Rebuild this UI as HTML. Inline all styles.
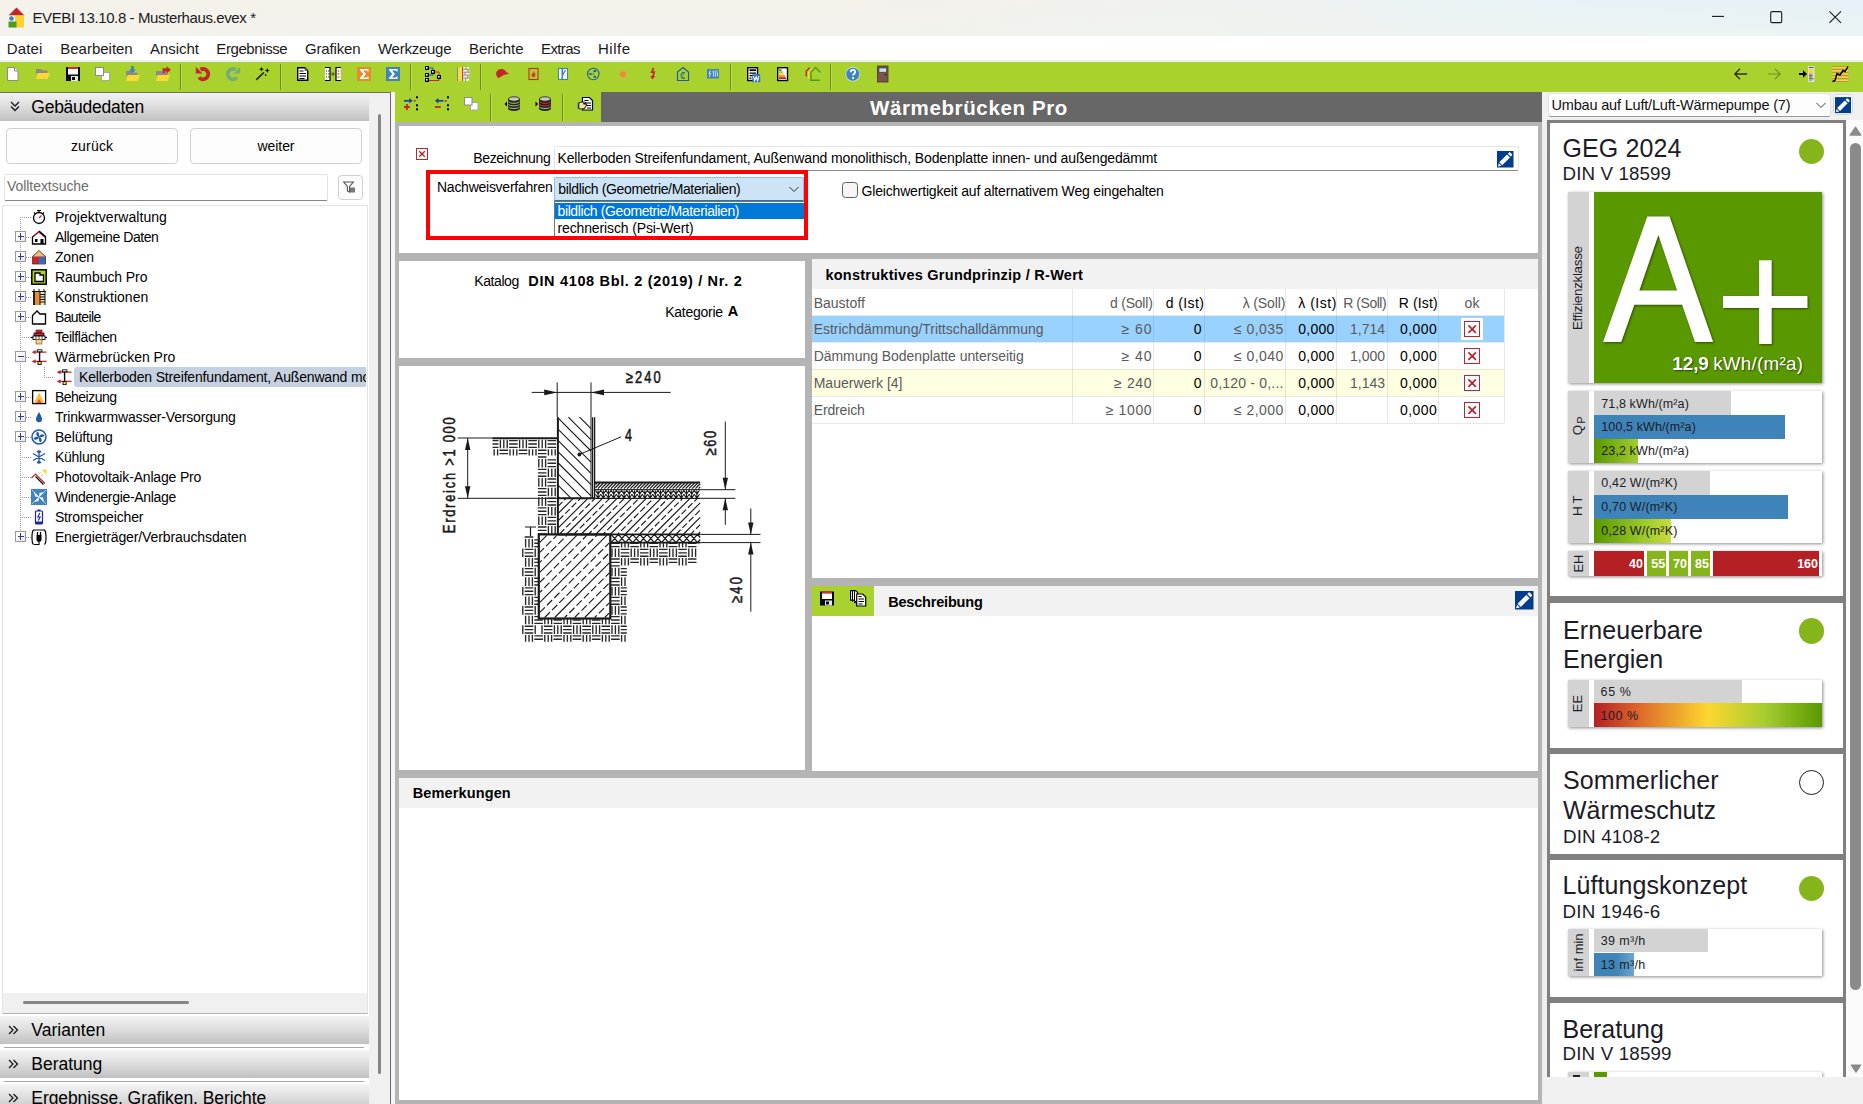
<!DOCTYPE html>
<html><head><meta charset="utf-8"><title>EVEBI</title>
<style>
html,body{margin:0;padding:0;}
html{overflow:hidden;width:1863px;height:1104px;}
body{width:1863px;height:1104px;overflow:hidden;position:relative;background:#f0f0f0;font-family:"Liberation Sans",sans-serif;color:#000;}
.t{position:absolute;white-space:nowrap;display:block;}
.b{position:absolute;box-sizing:border-box;}
svg{position:absolute;overflow:visible;}
</style></head><body>

<div class="b" style="left:0px;top:0px;width:1863px;height:36px;background:linear-gradient(180deg,rgba(255,255,255,0) 0%,rgba(240,244,238,.5) 100%),linear-gradient(90deg,#f5f1eb 0%,#f5f1eb 45%,#f1f2ee 62%,#e9f2f5 80%,#e6f2f8 100%);"></div>
<svg style="left:8px;top:7px" width="17" height="21" viewBox="0 0 17 21">
<polygon points="8.5,0.5 0.5,8.5 16.5,8.5" fill="#c4262c"/>
<rect x="1" y="8.5" width="6" height="6" fill="#f3f0ea"/>
<rect x="7" y="8.5" width="9" height="12" fill="#fbd230"/>
<circle cx="3.5" cy="11.5" r="2.3" fill="#3a86c4"/>
<rect x="0.5" y="14.5" width="8" height="6" fill="#4c9a1e"/>
</svg>
<span class="t" style="left:32.50px;top:7.50px;height:20px;line-height:20px;font-size:15px;color:#1b1b1b;letter-spacing:-0.389px;">EVEBI 13.10.8 - Musterhaus.evex *</span>
<svg style="left:1700px;top:0" width="163" height="36" viewBox="0 0 163 36" fill="none" stroke="#1a1a1a" stroke-width="1.1">
<path d="M12 16.400H24"/>
<rect x="70.700" y="11.600" width="11" height="11" rx="1.400"/>
<path d="M129.400 11.300L141 22.900M141 11.300L129.400 22.900"/>
</svg>
<div class="b" style="left:0px;top:36px;width:1863px;height:26px;background:#ffffff;"></div>
<span class="t" style="left:6.70px;top:38.50px;height:20px;line-height:20px;font-size:15px;color:#1a1a1a;letter-spacing:0.146px;">Datei</span>
<span class="t" style="left:60.30px;top:38.50px;height:20px;line-height:20px;font-size:15px;color:#1a1a1a;letter-spacing:-0.017px;">Bearbeiten</span>
<span class="t" style="left:150.00px;top:38.50px;height:20px;line-height:20px;font-size:15px;color:#1a1a1a;letter-spacing:-0.032px;">Ansicht</span>
<span class="t" style="left:216.30px;top:38.50px;height:20px;line-height:20px;font-size:15px;color:#1a1a1a;letter-spacing:-0.405px;">Ergebnisse</span>
<span class="t" style="left:305.00px;top:38.50px;height:20px;line-height:20px;font-size:15px;color:#1a1a1a;letter-spacing:-0.170px;">Grafiken</span>
<span class="t" style="left:378.00px;top:38.50px;height:20px;line-height:20px;font-size:15px;color:#1a1a1a;letter-spacing:-0.262px;">Werkzeuge</span>
<span class="t" style="left:469.00px;top:38.50px;height:20px;line-height:20px;font-size:15px;color:#1a1a1a;letter-spacing:-0.076px;">Berichte</span>
<span class="t" style="left:541.00px;top:38.50px;height:20px;line-height:20px;font-size:15px;color:#1a1a1a;letter-spacing:-0.602px;">Extras</span>
<span class="t" style="left:598.00px;top:38.50px;height:20px;line-height:20px;font-size:15px;color:#1a1a1a;letter-spacing:0.498px;">Hilfe</span>
<div class="b" style="left:0px;top:62px;width:1863px;height:30px;background:#aad22f;"></div>
<div class="b" style="left:0px;top:59.7px;width:1863px;height:2.3px;background:#f0f0f0;"></div>
<svg style="left:4px;top:66px" width="18" height="18" viewBox="0 0 18 18"><path d="M3.5 1.5h7l3.5 3.5v9.5h-10.5z" fill="#fff" stroke="#8a8a94"/><path d="M10.5 1.5v3.5h3.5" fill="#f4f4f4" stroke="#8a8a94"/></svg>
<svg style="left:34px;top:66px" width="18" height="18" viewBox="0 0 18 18"><path d="M2 3h5.5l1 1.5h5v3h-11.5z" fill="#8a8a8a"/><path d="M3.8 7h12.2l-2.4 6h-11.6z" fill="#fdd835"/></svg>
<svg style="left:64px;top:66px" width="18" height="18" viewBox="0 0 18 18"><rect x="2" y="1" width="14" height="14" fill="#0a0a14"/><rect x="4" y="1" width="10" height="2" fill="#d32f2f"/><rect x="4" y="3" width="10" height="5.5" fill="#fff"/><rect x="7" y="10" width="7" height="5" fill="#e8e8e8"/><rect x="8" y="11" width="3" height="3" fill="#0a0a14"/></svg>
<svg style="left:94px;top:66px" width="18" height="18" viewBox="0 0 18 18"><rect x="7.5" y="6.5" width="8" height="8" fill="#fff" stroke="#a6a6a6"/><rect x="1.5" y="1.5" width="8" height="8" fill="#fff" stroke="#8a8a94"/></svg>
<svg style="left:124px;top:66px" width="18" height="18" viewBox="0 0 18 18"><path d="M2 5h5.5l1 1.5h5v3h-11.5z" fill="#8a8a8a"/><path d="M3.8 9h12.2l-2.4 6h-11.6z" fill="#fdd835"/><path d="M7.2 0v3.5h-2.2l3.5 3.5l3.5-3.5h-2.2v-3.5z" fill="#3b83c0"/></svg>
<svg style="left:154px;top:66px" width="18" height="18" viewBox="0 0 18 18"><path d="M2 5h5.5l1 1.5h5v3h-11.5z" fill="#8a8a8a"/><path d="M3.8 9h12.2l-2.4 6h-11.6z" fill="#fdd835"/><path d="M8.5 2.2h4v-2l4.5 3.6l-4.5 3.6v-2h-1.5v1.6h-2.5z" fill="#c4262c"/></svg>
<div class="b" style="left:180.0px;top:64px;width:1px;height:26px;background:#6f8a1e;"></div><div class="b" style="left:181.0px;top:64px;width:1px;height:26px;background:#b9dc55;"></div>
<svg style="left:194px;top:66px" width="18" height="18" viewBox="0 0 18 18"><path d="M6.400 3.600A5.200 5.200 0 1 1 5 11.400" fill="none" stroke="#c4262c" stroke-width="3.800"/><path d="M1.800 0.800v6.600h6.600z" fill="#c4262c"/></svg>
<svg style="left:224px;top:66px" width="18" height="18" viewBox="0 0 18 18"><g transform="translate(18,0) scale(-1,1)"><path d="M6.400 3.600A5.200 5.200 0 1 1 5 11.400" fill="none" stroke="#74ad7c" stroke-width="3.800"/><path d="M1.800 0.800v6.600h6.600z" fill="#74ad7c"/></g></svg>
<svg style="left:254px;top:66px" width="18" height="18" viewBox="0 0 18 18"><path d="M2.200 13.900L9.900 6.400" stroke="#222" stroke-width="1.500"/><path d="M7.500 0.800l.700 1.700l1.700.700l-1.700.700l-.700 1.700l-.700-1.700l-1.700-.700l1.700-.700zM13.300 2l.700 1.800l1.800.700l-1.800.700l-.700 1.800l-.700-1.800l-1.800-.700l1.800-.700z" fill="#111"/><ellipse cx="11.600" cy="9" rx=".800" ry="1.100" fill="#111"/></svg>
<div class="b" style="left:280.0px;top:64px;width:1px;height:26px;background:#6f8a1e;"></div><div class="b" style="left:281.0px;top:64px;width:1px;height:26px;background:#b9dc55;"></div>
<svg style="left:293px;top:66px" width="18" height="18" viewBox="0 0 18 18"><path d="M4.7 1.7h7l3 3v9.6h-10z" fill="#fff" stroke="#000" stroke-width="1.4"/><path d="M11.5 1.5v3.5h3.5z" fill="#777"/><path d="M6.5 5h4M6.5 7.5h6.5M6.5 10h6.5M6.5 12.5h5" stroke="#000" stroke-width="1.2"/></svg>
<svg style="left:324px;top:66px" width="18" height="18" viewBox="0 0 18 18"><rect x="1" y="1.5" width="5" height="13" fill="#fff"/><rect x="12" y="1.5" width="5" height="13" fill="#fff"/><path d="M1 1.5h5M1 14.5h5M12 1.5h5M12 14.5h5M6 1v14M12 1v14" stroke="#000" stroke-width="1.2"/><path d="M2 5h3M2 8h3M2 11h3" stroke="#333" stroke-width="1" stroke-dasharray="1 1"/><path d="M13.5 5h3M13.5 8h3M13.5 11h3" stroke="#c4262c" stroke-width="1.2" stroke-dasharray="1.5 .7"/><circle cx="9" cy="8" r="1.7" fill="#5d6b2a"/></svg>
<svg style="left:354.5px;top:66px" width="18" height="18" viewBox="0 0 18 18"><rect x="2" y="1" width="14" height="14" fill="#ea8a2e"/><path d="M5 3h8.5v2.6h-1.2v-1h-4.3l3 3.4l-3 3.4h4.3v-1h1.2v2.6h-8.5v-1.3l3.3-3.7l-3.3-3.7z" fill="#fff"/></svg>
<svg style="left:384px;top:66px" width="18" height="18" viewBox="0 0 18 18"><rect x="2" y="1" width="14" height="14" fill="#3f84bc"/><path d="M5 3h8.5v2.6h-1.2v-1h-4.3l3 3.4l-3 3.4h4.3v-1h1.2v2.6h-8.5v-1.3l3.3-3.7l-3.3-3.7z" fill="#fff"/></svg>
<div class="b" style="left:410.0px;top:64px;width:1px;height:26px;background:#6f8a1e;"></div><div class="b" style="left:411.0px;top:64px;width:1px;height:26px;background:#b9dc55;"></div>
<svg style="left:424px;top:66px" width="18" height="18" viewBox="0 0 18 18"><path d="M5 2h4v3M5 9h4v-3" fill="none" stroke="#1554b0" stroke-width="1"/><path d="M11 6h4v3M5 14.5h10v-3" fill="none" stroke="#c4262c" stroke-width="1"/><rect x="1" y="0" width="4" height="4" fill="#000"/><rect x="2" y="1" width="1.6" height="1.6" fill="#fff"/><rect x="7" y="4" width="4" height="4" fill="#000"/><rect x="8" y="5" width="1.6" height="1.6" fill="#fff"/><rect x="1" y="7" width="4" height="4" fill="#000"/><rect x="2" y="8" width="1.6" height="1.6" fill="#fff"/><rect x="13" y="9" width="4" height="4" fill="#000"/><rect x="14" y="10" width="1.6" height="1.6" fill="#fff"/><rect x="1" y="12" width="4" height="4" fill="#000"/><rect x="2" y="13" width="1.6" height="1.6" fill="#fff"/></svg>
<svg style="left:455px;top:66px" width="18" height="18" viewBox="0 0 18 18"><rect x="2" y="1" width="1.2" height="14" fill="#8a8a8a"/><rect x="3.2" y="1" width="4" height="14" fill="#fdd835"/><path d="M3.2 3h4M3.2 6h4M3.2 9h4M3.2 12h4" stroke="#f3e79a" stroke-width="1"/><rect x="7.2" y="1" width="1" height="14" fill="#c4262c"/><rect x="8.2" y="1" width="6" height="14" fill="#efefef"/><path d="M8.2 3.3h6M8.2 6.2h6M8.2 9.1h6M8.2 12h6M11 1v2.3M12.8 3.3v2.9M10 6.2v2.9M12.8 9.1v2.9M10.5 12v3" stroke="#8e8e8e" stroke-width="1"/></svg>
<div class="b" style="left:480.0px;top:64px;width:1px;height:26px;background:#6f8a1e;"></div><div class="b" style="left:481.0px;top:64px;width:1px;height:26px;background:#b9dc55;"></div>
<svg style="left:493px;top:66px" width="18" height="18" viewBox="0 0 18 18"><path d="M3.2 8.5c-.6-3 2-5.6 5.2-5.6c2.6 0 4.2 1.3 4.8 3.2l3 1.6l-5.6 1.4l-4.8 3c-1.4-.6-2.2-1.9-2.6-3.6z" fill="#c4262c"/></svg>
<svg style="left:524px;top:66px" width="18" height="18" viewBox="0 0 18 18"><rect x="5" y="2.5" width="9" height="11" fill="none" stroke="#c4262c" stroke-width="1.1"/><path d="M9.5 5c1 1.3 2 2.4 2 4c0 1.3-.9 2.2-2 2.2s-2-.9-2-2.2c0-.9.6-1.5 1-2.2c.2.8.6 1 .8 1c0-.9-.1-1.8.2-2.8z" fill="#d9362f"/></svg>
<svg style="left:554px;top:66px" width="18" height="18" viewBox="0 0 18 18"><rect x="4.5" y="2.5" width="9" height="11" fill="#fff" stroke="#3f84bc" stroke-width="1.1"/><path d="M8.3 3v10.5" stroke="#3f84bc" stroke-width="1.6"/><path d="M8.5 9.5l3-5.5" stroke="#3f84bc" stroke-width="1.3"/></svg>
<svg style="left:584px;top:66px" width="18" height="18" viewBox="0 0 18 18"><circle cx="9.3" cy="8" r="5.7" fill="none" stroke="#1e5aa8" stroke-width="1.1"/><ellipse cx="10.8" cy="5.2" rx="1.5" ry="1.1" fill="#1e5aa8"/><ellipse cx="6.5" cy="8" rx="1.5" ry="1.1" fill="#1e5aa8"/><ellipse cx="10.8" cy="10.8" rx="1.5" ry="1.1" fill="#1e5aa8"/><circle cx="9.3" cy="8" r=".8" fill="#1e5aa8"/></svg>
<svg style="left:614px;top:66px" width="18" height="18" viewBox="0 0 18 18"><circle cx="9" cy="8.3" r="3" fill="#f0883a"/><g stroke="#f0a060" stroke-width="1.1"><path d="M9 2.7v1.6M9 12.3v1.6M3.4 8.3h1.6M13 8.3h1.6M5 4.3l1.2 1.2M11.8 11.1l1.2 1.2M13 4.3l-1.2 1.2M6.2 11.1L5 12.3"/></g></svg>
<svg style="left:644px;top:66px" width="18" height="18" viewBox="0 0 18 18"><path d="M9.5 2l-1.8 4.2h2.6l-1.6 4.6" fill="none" stroke="#c4262c" stroke-width="1.7"/><path d="M6.3 10h5l-3 3.4z" fill="#c4262c"/></svg>
<svg style="left:674px;top:66px" width="18" height="18" viewBox="0 0 18 18"><path d="M3.5 14.5v-8.5l5.5-4.5l5.5 4.5v8.5z" fill="none" stroke="#1e5aa8" stroke-width="1.2"/><path d="M11 7.2a2.6 2.8 0 1 0 0 4.6" fill="none" stroke="#1e5aa8" stroke-width="1.1"/><path d="M7 8.8h3M7 10.2h3" stroke="#3f9a6a" stroke-width=".8"/></svg>
<svg style="left:704px;top:66px" width="18" height="18" viewBox="0 0 18 18"><rect x="3" y="3" width="12" height="9.5" fill="#3f84bc"/><path d="M6.5 4.5l-1.5 3h1.6l-1.4 3.4M9.3 4.5c-1 1.4 1 2.6 0 6M11.3 4.5c-1 1.4 1 2.6 0 6M13.3 4.5c-1 1.4 1 2.6 0 6" fill="none" stroke="#e8f2fa" stroke-width=".9"/></svg>
<div class="b" style="left:730.0px;top:64px;width:1px;height:26px;background:#6f8a1e;"></div><div class="b" style="left:731.0px;top:64px;width:1px;height:26px;background:#b9dc55;"></div>
<svg style="left:744px;top:66px" width="18" height="18" viewBox="0 0 18 18"><rect x="3.7" y="1.7" width="9.8" height="12.8" fill="#fff" stroke="#000" stroke-width="1.4"/><path d="M5.5 4.2h6.5" stroke="#000" stroke-width="1.8"/><path d="M5.5 7.2h6.5M5.5 9.7h6.5M5.5 12.2h2" stroke="#000" stroke-width="1.2"/><rect x="8.2" y="8.2" width="8" height="8" fill="#3a6cc0"/><path d="M9.5 10.2l1.2 4.6l1.5-4l1.5 4l1.2-4.6" fill="none" stroke="#fff" stroke-width="1.1"/></svg>
<svg style="left:774px;top:66px" width="18" height="18" viewBox="0 0 18 18"><rect x="3.7" y="1.7" width="9.8" height="12.8" fill="#fff" stroke="#000" stroke-width="1.4"/><rect x="5" y="3.2" width="2.6" height="1.8" fill="#4c9a1e"/><rect x="5" y="5.2" width="3.8" height="1.8" fill="#9ccc3a"/><rect x="5" y="7.2" width="5" height="1.8" fill="#fdd835"/><rect x="5" y="9.2" width="6" height="1.8" fill="#ea8a2e"/><rect x="5" y="11.2" width="7" height="1.8" fill="#c4262c"/></svg>
<svg style="left:804px;top:66px" width="18" height="18" viewBox="0 0 18 18"><path d="M2.3 10.5v-5.5l3.5-3.5" fill="none" stroke="#c4262c" stroke-width="1.4"/><path d="M4.8 12.5v-6l4-4" fill="none" stroke="#fdd835" stroke-width="1.6"/><path d="M16.5 6.5l-5-5l-4.6 4.6v8.2h9" fill="none" stroke="#4c9a1e" stroke-width="1.4"/></svg>
<div class="b" style="left:830.0px;top:64px;width:1px;height:26px;background:#6f8a1e;"></div><div class="b" style="left:831.0px;top:64px;width:1px;height:26px;background:#b9dc55;"></div>
<svg style="left:844px;top:65.5px" width="18" height="18" viewBox="0 0 18 18"><circle cx="8.8" cy="8.2" r="7.4" fill="#c7d9e6"/><circle cx="8.8" cy="8.2" r="6.5" fill="#3f84bc"/><path d="M6.6 6.3c0-1.5 1-2.4 2.3-2.4s2.3.9 2.3 2.1c0 1.7-2.2 1.8-2.2 3.6" fill="none" stroke="#fff" stroke-width="1.7"/><circle cx="9" cy="12" r="1.1" fill="#fff"/></svg>
<svg style="left:874px;top:66px" width="18" height="18" viewBox="0 0 18 18"><rect x="3.5" y="0" width="10.5" height="16" fill="#7a5548"/><rect x="3.5" y="0" width="10.5" height="16" fill="none" stroke="#4a2f28" stroke-width=".8"/><rect x="5" y="2" width="7.5" height="4.2" fill="#bfe3f7" stroke="#4a2f28" stroke-width=".6"/><path d="M10.5 8.8h2.2" stroke="#2a1a14" stroke-width="1"/></svg>
<svg style="left:1732px;top:66px" width="18" height="18" viewBox="0 0 18 18"><path d="M2.5 8h12.5M8 2.8L2.8 8l5.2 5.2" fill="none" stroke="#2b2f1e" stroke-width="1.3"/></svg>
<svg style="left:1766px;top:66px" width="18" height="18" viewBox="0 0 18 18"><path d="M2 8h12.5M9 2.8l5.2 5.2l-5.2 5.2" fill="none" stroke="#6e8f22" stroke-width="1.2"/></svg>
<svg style="left:1798px;top:66px" width="18" height="18" viewBox="0 0 18 18"><path d="M1 8h5" stroke="#000" stroke-width="2"/><path d="M5 4.3l4 3.7l-4 3.7z" fill="#000"/><rect x="10" y="0" width="6.5" height="16" fill="#dcdce8"/><rect x="11" y="1" width="4.5" height="1" fill="#555"/><rect x="11" y="3" width="4.5" height="4" fill="#fdd835"/><rect x="11" y="7.5" width="3.5" height="1.3" fill="#7cb342"/><rect x="11" y="9.2" width="3.5" height="1.3" fill="#c4262c"/><rect x="11" y="10.8" width="3.5" height="1.3" fill="#7cb342"/><rect x="11" y="12.3" width="4.5" height="1" fill="#555"/><rect x="11" y="13.6" width="2.5" height="1.2" fill="#7cb342"/></svg>
<svg style="left:1832px;top:66px" width="18" height="18" viewBox="0 0 18 18"><rect x="0" y="0" width="16.5" height="16" fill="#a89a50"/><rect x="0" y="1" width="16.5" height="1.6" fill="#fdd835"/><rect x="0" y="4.1" width="16.5" height="1.6" fill="#fdd835"/><rect x="0" y="7.2" width="16.5" height="1.6" fill="#fdd835"/><rect x="0" y="10.3" width="16.5" height="1.6" fill="#fdd835"/><rect x="0" y="13.4" width="16.5" height="1.6" fill="#fdd835"/><path d="M0.5 15.5l2.5-1l2-7l3 1.5l3-4.5l2 1l3-5" fill="none" stroke="#000" stroke-width="1.4"/></svg>
<div class="b" style="left:395px;top:92px;width:206px;height:30.3px;background:#aad22f;"></div>
<svg style="left:404px;top:96px" width="18" height="18" viewBox="0 0 18 18"><path d="M0 4.8h6" stroke="#0d47a1" stroke-width="1.7"/><path d="M5.3 2l3.4 2.8l-3.4 2.8z" fill="#0d47a1"/><rect x="9.8" y="4" width="1.8" height="1.7" fill="#c4262c"/><rect x="12" y="0.3" width="2" height="2" fill="#000"/><rect x="12" y="8.3" width="2" height="2" fill="#000"/><rect x="12" y="12.3" width="2" height="2" fill="#000"/><path d="M0 11h5.8M2.9 8.1v5.8" stroke="#c4262c" stroke-width="1.8"/></svg>
<svg style="left:435px;top:96px" width="18" height="18" viewBox="0 0 18 18"><path d="M2.5 4.8h6" stroke="#0d47a1" stroke-width="1.7"/><path d="M3.4 2L0 4.8l3.4 2.8z" fill="#0d47a1"/><rect x="9.8" y="4" width="1.8" height="1.7" fill="#c4262c"/><rect x="12" y="0.3" width="2" height="2" fill="#000"/><rect x="12" y="8.3" width="2" height="2" fill="#000"/><rect x="12" y="12.3" width="2" height="2" fill="#000"/><path d="M0 11h5.8" stroke="#c4262c" stroke-width="1.8"/></svg>
<svg style="left:463px;top:96px" width="18" height="18" viewBox="0 0 18 18"><rect x="7.5" y="6.5" width="7.5" height="7.5" fill="#fff" stroke="#a6a6a6"/><rect x="1.5" y="1.5" width="7.5" height="7.5" fill="#fff" stroke="#8a8a94"/></svg>
<div class="b" style="left:490.0px;top:94px;width:1px;height:27px;background:#6f8a1e;"></div><div class="b" style="left:491.0px;top:94px;width:1px;height:27px;background:#b9dc55;"></div>
<svg style="left:504px;top:96px" width="18" height="18" viewBox="0 0 18 18"><path d="M4 3v9.5c0 1.4 2.7 2.4 6 2.4s6-1 6-2.4v-9.500z" fill="#222"/><path d="M4.3 5.6c1 1.2 3 1.7 5.700 1.700s4.700-.5 5.700-1.700" fill="none" stroke="#a8d040" stroke-width="1"/><path d="M4.3 8.200c1 1.200 3 1.700 5.700 1.700s4.700-.5 5.700-1.700" fill="none" stroke="#a8d040" stroke-width="1"/><path d="M4.300 10.800c1 1.200 3 1.700 5.700 1.700s4.700-.5 5.700-1.700" fill="none" stroke="#bbb" stroke-width="1"/><ellipse cx="10" cy="3" rx="5.600" ry="2.200" fill="#c8c8c8" stroke="#222" stroke-width=".8"/><path d="M3 5.500v5l-2.500-2.500z" fill="#000"/></svg>
<svg style="left:535px;top:96px" width="18" height="18" viewBox="0 0 18 18"><path d="M4 3v9.5c0 1.4 2.7 2.4 6 2.4s6-1 6-2.4v-9.500z" fill="#222"/><path d="M4.3 5.6c1 1.2 3 1.7 5.700 1.700s4.700-.5 5.700-1.700" fill="none" stroke="#d32f2f" stroke-width="1"/><path d="M4.3 8.200c1 1.200 3 1.700 5.700 1.700s4.700-.5 5.700-1.700" fill="none" stroke="#d32f2f" stroke-width="1"/><path d="M4.300 10.800c1 1.200 3 1.700 5.700 1.700s4.700-.5 5.700-1.700" fill="none" stroke="#bbb" stroke-width="1"/><ellipse cx="10" cy="3" rx="5.600" ry="2.200" fill="#c8c8c8" stroke="#222" stroke-width=".8"/><path d="M.500 5.500v5l2.500-2.500z" fill="#000"/></svg>
<div class="b" style="left:562.0px;top:94px;width:1px;height:27px;background:#6f8a1e;"></div><div class="b" style="left:563.0px;top:94px;width:1px;height:27px;background:#b9dc55;"></div>
<svg style="left:576px;top:96px" width="18" height="18" viewBox="0 0 18 18"><path d="M6.500 1.500h7l3 3v9.500h-10z" fill="#fff" stroke="#000" stroke-width="1.200"/><path d="M8.500 4.500h4M11 7h4M11 9.500h4M11 12h4" stroke="#000" stroke-width="1"/><path d="M1.500 6.500h1.300v6.500h-1.300z" fill="#3f84bc"/><path d="M2.800 6.800c2-.8 5-1 7.500-.3v1.200h-3l3.500.6v1.300l-1 .3v1.200l-1 .3v1.100l-3 .5c-1.500 0-2.500-.3-3-.7z" fill="#f3e3a8" stroke="#000" stroke-width=".9"/></svg>
<div class="b" style="left:0px;top:92px;width:369px;height:1012px;background:#ffffff;"></div>
<div class="b" style="left:369px;top:92px;width:22px;height:1012px;background:#f0f0f0;"></div>
<div class="b" style="left:390px;top:92px;width:1.3px;height:1012px;background:#6a6a6a;"></div>
<div class="b" style="left:391.3px;top:92px;width:3.7px;height:1012px;background:#f5f5fa;"></div>
<div class="b" style="left:378px;top:114px;width:3px;height:960px;background:#868686;border-radius:1.500px;"></div>
<div class="b" style="left:0px;top:92px;width:369px;height:29.3px;background:linear-gradient(180deg,#f4f4f4 0%,#e4e4e4 35%,#cfcfcf 75%,#c0c0c0 100%);"></div>
<div class="b" style="left:0px;top:92px;width:391px;height:1px;background:#6e6e6e;"></div>
<svg style="left:9.5px;top:101px" width="10" height="11" viewBox="0 0 10 11"><path d="M1 1l4 4l4-4M1 5.500l4 4l4-4" fill="none" stroke="#1a1a1a" stroke-width="1.300"/></svg>
<span class="t" style="left:31.30px;top:95.80px;height:23px;line-height:23px;font-size:17.5px;letter-spacing:-0.255px;">Gebäudedaten</span>
<div class="b" style="left:6px;top:128px;width:172px;height:36px;background:#fdfdfd;border:1px solid #d0d0d0;border-radius:4px;"></div>
<span class="t" style="left:70.90px;top:137.20px;height:18px;line-height:18px;font-size:14px;letter-spacing:0.193px;">zurück</span>
<div class="b" style="left:190px;top:128px;width:172px;height:36px;background:#fdfdfd;border:1px solid #d0d0d0;border-radius:4px;"></div>
<span class="t" style="left:257.60px;top:137.20px;height:18px;line-height:18px;font-size:14px;letter-spacing:-0.089px;">weiter</span>
<div class="b" style="left:4px;top:174px;width:324px;height:27px;background:#fff;border:1px solid #e3e3e3;border-bottom:1.500px solid #868686;border-radius:2px;"></div>
<span class="t" style="left:6.90px;top:177.30px;height:18px;line-height:18px;font-size:14px;color:#6d6d6d;letter-spacing:-0.042px;">Volltextsuche</span>
<div class="b" style="left:337.5px;top:175.3px;width:25px;height:24.3px;background:#fdfdfd;border:1px solid #d0d0d0;border-radius:4px;"></div>
<svg style="left:343px;top:181px" width="13" height="13" viewBox="0 0 13 13"><path d="M0.700 1h9.600l-3.700 4.500v5.500l-2.200-1.200v-4.300z" fill="none" stroke="#555" stroke-width="1.100"/><rect x="7" y="6.500" width="5" height="5" fill="#777"/></svg>
<div class="b" style="left:1.5px;top:205px;width:366.5px;height:809px;background:#fff;border:1px solid #e3e3e3;border-bottom-color:#b4b4b4;"></div>
<div class="b" style="left:2.5px;top:993px;width:364.5px;height:20px;background:#f0f0f0;"></div>
<div class="b" style="left:23px;top:1001px;width:166px;height:3px;background:#868686;border-radius:1.500px;"></div>
<div class="b" style="left:19.5px;top:217px;width:1px;height:320px;background-image:linear-gradient(#9a9a9a 50%,transparent 50%);background-size:1px 2px;"></div>
<div class="b" style="left:19.5px;top:217px;width:11.5px;height:1px;background-image:linear-gradient(90deg,#9a9a9a 50%,transparent 50%);background-size:2px 1px;"></div>
<svg style="left:31px;top:209px" width="16" height="16" viewBox="0 0 16 16"><circle cx="8" cy="9" r="5.500" fill="#fff" stroke="#000" stroke-width="1.300"/><path d="M6 1.500h4M8 1.500v2M3 3.500l1.500 1.500M13 3.500l-1.500 1.500" stroke="#000" stroke-width="1.200"/><path d="M8 9l2.500-2.500" stroke="#c4262c" stroke-width="1.200"/></svg>
<span class="t" style="left:54.90px;top:208.00px;height:18px;line-height:18px;font-size:14px;letter-spacing:0.045px;">Projektverwaltung</span>
<div class="b" style="left:19.5px;top:237px;width:11.5px;height:1px;background-image:linear-gradient(90deg,#9a9a9a 50%,transparent 50%);background-size:2px 1px;"></div>
<div class="b" style="left:15px;top:230.8px;width:11px;height:11px;background:#fff;border:1px solid #9a9a9a;background:linear-gradient(135deg,#fff 30%,#e4e4e4);"></div><div class="b" style="left:17.5px;top:235.70000000000002px;width:6.5px;height:1.2px;background:#2a3f8f;"></div><div class="b" style="left:20px;top:233.10000000000002px;width:1.2px;height:6.5px;background:#2a3f8f;"></div>
<svg style="left:31px;top:229px" width="16" height="16" viewBox="0 0 16 16"><path d="M1.500 15v-7l6.500-5.500l6.500 5.500v7z" fill="#fff" stroke="#000" stroke-width="1.300"/><path d="M1 8l7-6l7 6l-1 1l-6-5z" fill="#c4262c"/><path d="M8 2l7 6" stroke="#000" stroke-width="1.200"/><rect x="4" y="10" width="2.500" height="3" fill="#000"/><rect x="9.500" y="10" width="3" height="5" fill="#000"/></svg>
<span class="t" style="left:54.90px;top:228.00px;height:18px;line-height:18px;font-size:14px;letter-spacing:-0.434px;">Allgemeine Daten</span>
<div class="b" style="left:19.5px;top:257px;width:11.5px;height:1px;background-image:linear-gradient(90deg,#9a9a9a 50%,transparent 50%);background-size:2px 1px;"></div>
<div class="b" style="left:15px;top:250.8px;width:11px;height:11px;background:#fff;border:1px solid #9a9a9a;background:linear-gradient(135deg,#fff 30%,#e4e4e4);"></div><div class="b" style="left:17.5px;top:255.70000000000002px;width:6.5px;height:1.2px;background:#2a3f8f;"></div><div class="b" style="left:20px;top:253.10000000000002px;width:1.2px;height:6.5px;background:#2a3f8f;"></div>
<svg style="left:31px;top:249px" width="16" height="16" viewBox="0 0 16 16"><path d="M1.500 15v-7.500l6.500-6l6.500 6v7.500z" fill="#c4262c" stroke="#7a1a1a" stroke-width=".800"/><path d="M8 2l6 5.500h-12z" fill="#e8c080"/><rect x="8" y="8" width="6" height="7" fill="#2a70c0"/></svg>
<span class="t" style="left:54.90px;top:248.00px;height:18px;line-height:18px;font-size:14px;letter-spacing:-0.124px;">Zonen</span>
<div class="b" style="left:19.5px;top:277px;width:11.5px;height:1px;background-image:linear-gradient(90deg,#9a9a9a 50%,transparent 50%);background-size:2px 1px;"></div>
<div class="b" style="left:15px;top:270.8px;width:11px;height:11px;background:#fff;border:1px solid #9a9a9a;background:linear-gradient(135deg,#fff 30%,#e4e4e4);"></div><div class="b" style="left:17.5px;top:275.7px;width:6.5px;height:1.2px;background:#2a3f8f;"></div><div class="b" style="left:20px;top:273.1px;width:1.2px;height:6.5px;background:#2a3f8f;"></div>
<svg style="left:31px;top:269px" width="16" height="16" viewBox="0 0 16 16"><rect x="0.800" y="0.800" width="14.400" height="14.400" fill="#aad22f" stroke="#000" stroke-width="1.500"/><path d="M4 4h5v2h3.500v6.500h-8.500z" fill="#fff" stroke="#000" stroke-width="1.300"/></svg>
<span class="t" style="left:54.90px;top:268.00px;height:18px;line-height:18px;font-size:14px;letter-spacing:-0.071px;">Raumbuch Pro</span>
<div class="b" style="left:19.5px;top:297px;width:11.5px;height:1px;background-image:linear-gradient(90deg,#9a9a9a 50%,transparent 50%);background-size:2px 1px;"></div>
<div class="b" style="left:15px;top:290.8px;width:11px;height:11px;background:#fff;border:1px solid #9a9a9a;background:linear-gradient(135deg,#fff 30%,#e4e4e4);"></div><div class="b" style="left:17.5px;top:295.7px;width:6.5px;height:1.2px;background:#2a3f8f;"></div><div class="b" style="left:20px;top:293.1px;width:1.2px;height:6.5px;background:#2a3f8f;"></div>
<svg style="left:31px;top:289px" width="16" height="16" viewBox="0 0 16 16"><rect x="2" y="3" width="2" height="13" fill="#222"/><rect x="4" y="3" width="5" height="13" fill="#ea8a2e"/><rect x="9" y="3" width="5" height="13" fill="#f3e3a8"/><path d="M9 3v13M14 3v13M9 5.500h5M9 8h5M9 10.500h5M9 13h5M1 2.500h14M3 0v3M8 0v3M13 0v3" stroke="#111" stroke-width="1"/></svg>
<span class="t" style="left:54.90px;top:288.00px;height:18px;line-height:18px;font-size:14px;letter-spacing:-0.007px;">Konstruktionen</span>
<div class="b" style="left:19.5px;top:317px;width:11.5px;height:1px;background-image:linear-gradient(90deg,#9a9a9a 50%,transparent 50%);background-size:2px 1px;"></div>
<div class="b" style="left:15px;top:310.8px;width:11px;height:11px;background:#fff;border:1px solid #9a9a9a;background:linear-gradient(135deg,#fff 30%,#e4e4e4);"></div><div class="b" style="left:17.5px;top:315.7px;width:6.5px;height:1.2px;background:#2a3f8f;"></div><div class="b" style="left:20px;top:313.1px;width:1.2px;height:6.5px;background:#2a3f8f;"></div>
<svg style="left:31px;top:309px" width="16" height="16" viewBox="0 0 16 16"><path d="M1.500 15v-8.500l4.500-4.500l3 3h5.500v10z" fill="#fff" stroke="#000" stroke-width="1.300"/></svg>
<span class="t" style="left:54.90px;top:308.00px;height:18px;line-height:18px;font-size:14px;letter-spacing:-0.585px;">Bauteile</span>
<div class="b" style="left:19.5px;top:337px;width:11.5px;height:1px;background-image:linear-gradient(90deg,#9a9a9a 50%,transparent 50%);background-size:2px 1px;"></div>
<svg style="left:31px;top:329px" width="16" height="16" viewBox="0 0 16 16"><rect x="5" y="1" width="6" height="3" fill="#c4262c" stroke="#7a1a1a" stroke-width=".700"/><rect x="3" y="4" width="10" height="3" fill="#c4262c" stroke="#000" stroke-width=".700"/><path d="M0 8.500h16" stroke="#000" stroke-width="1.200"/><rect x="2" y="7" width="12" height="3.500" fill="#fff" stroke="#000" stroke-width=".900"/><path d="M5 7v3.500M8 7v3.500M11 7v3.500" stroke="#000" stroke-width=".700"/><rect x="5" y="10.500" width="6" height="4.500" fill="#f3c880" stroke="#8a5a20" stroke-width=".700"/></svg>
<span class="t" style="left:54.90px;top:328.00px;height:18px;line-height:18px;font-size:14px;letter-spacing:-0.395px;">Teilflächen</span>
<div class="b" style="left:19.5px;top:357px;width:11.5px;height:1px;background-image:linear-gradient(90deg,#9a9a9a 50%,transparent 50%);background-size:2px 1px;"></div>
<div class="b" style="left:15px;top:350.8px;width:11px;height:11px;background:#fff;border:1px solid #9a9a9a;background:linear-gradient(135deg,#fff 30%,#e4e4e4);"></div><div class="b" style="left:17.5px;top:355.7px;width:6.5px;height:1.2px;background:#2a3f8f;"></div>
<svg style="left:31px;top:349px" width="16" height="16" viewBox="0 0 16 16"><path d="M2 3.200h13.500M2 12.400h13.500" stroke="#c4262c" stroke-width="1.200"/><path d="M4.600 1.100l-3.800 2.100l3.800 2.100zM4.600 10.300l-3.800 2.100l3.800 2.100z" fill="#c4262c"/><path d="M8.600 2v11" stroke="#111" stroke-width="1.400"/><rect x="6.300" y="0.800" width="4.600" height="2" fill="#fff" stroke="#111" stroke-width=".900"/><rect x="7" y="12.600" width="3.200" height="3" fill="#fdd835" stroke="#111" stroke-width=".900"/></svg>
<span class="t" style="left:54.90px;top:348.00px;height:18px;line-height:18px;font-size:14px;letter-spacing:-0.006px;">Wärmebrücken Pro</span>
<div class="b" style="left:44px;top:367px;width:1px;height:10px;background-image:linear-gradient(#9a9a9a 50%,transparent 50%);background-size:1px 2px;"></div>
<div class="b" style="left:44px;top:377px;width:10px;height:1px;background-image:linear-gradient(90deg,#9a9a9a 50%,transparent 50%);background-size:2px 1px;"></div>
<svg style="left:55.5px;top:369px" width="16" height="16" viewBox="0 0 16 16"><path d="M2 3.200h13.500M2 12.400h13.500" stroke="#c4262c" stroke-width="1.200"/><path d="M4.600 1.100l-3.800 2.100l3.800 2.100zM4.600 10.300l-3.800 2.100l3.800 2.100z" fill="#c4262c"/><path d="M8.600 2v11" stroke="#111" stroke-width="1.400"/><rect x="6.300" y="0.800" width="4.600" height="2" fill="#fff" stroke="#111" stroke-width=".900"/><rect x="7" y="12.600" width="3.200" height="3" fill="#fdd835" stroke="#111" stroke-width=".900"/></svg>
<div class="b" style="left:74px;top:367px;width:292px;height:19.5px;background:#c5d1de;border-radius:3px 0 0 3px;"></div>
<div class="b" style="left:74px;top:367px;width:292px;height:20px;overflow:hidden;"><span class="t" style="left:5.00px;top:1.00px;height:18px;line-height:18px;font-size:14px;letter-spacing:-0.163px;">Kellerboden Streifenfundament, Außenwand monolithisch</span></div>
<div class="b" style="left:19.5px;top:397px;width:11.5px;height:1px;background-image:linear-gradient(90deg,#9a9a9a 50%,transparent 50%);background-size:2px 1px;"></div>
<div class="b" style="left:15px;top:390.8px;width:11px;height:11px;background:#fff;border:1px solid #9a9a9a;background:linear-gradient(135deg,#fff 30%,#e4e4e4);"></div><div class="b" style="left:17.5px;top:395.7px;width:6.5px;height:1.2px;background:#2a3f8f;"></div><div class="b" style="left:20px;top:393.1px;width:1.2px;height:6.5px;background:#2a3f8f;"></div>
<svg style="left:31px;top:389px" width="16" height="16" viewBox="0 0 16 16"><rect x="1.600" y="1.600" width="13" height="13" fill="#fff" stroke="#000" stroke-width="1.300"/><path d="M8.100 3.500l5 10.500h-10z" fill="#fdb933"/><path d="M8.100 10l2.500 4h-5z" fill="#e8532f"/></svg>
<span class="t" style="left:54.90px;top:388.00px;height:18px;line-height:18px;font-size:14px;letter-spacing:-0.496px;">Beheizung</span>
<div class="b" style="left:19.5px;top:417px;width:11.5px;height:1px;background-image:linear-gradient(90deg,#9a9a9a 50%,transparent 50%);background-size:2px 1px;"></div>
<div class="b" style="left:15px;top:410.8px;width:11px;height:11px;background:#fff;border:1px solid #9a9a9a;background:linear-gradient(135deg,#fff 30%,#e4e4e4);"></div><div class="b" style="left:17.5px;top:415.7px;width:6.5px;height:1.2px;background:#2a3f8f;"></div><div class="b" style="left:20px;top:413.1px;width:1.2px;height:6.5px;background:#2a3f8f;"></div>
<svg style="left:31px;top:409px" width="16" height="16" viewBox="0 0 16 16"><path d="M8 3c1.500 3 3 5 3 7.200a3 3 0 0 1-6 0c0-2.200 1.500-4.200 3-7.200z" fill="#1e5aa8"/></svg>
<span class="t" style="left:54.90px;top:408.00px;height:18px;line-height:18px;font-size:14px;letter-spacing:-0.181px;">Trinkwarmwasser-Versorgung</span>
<div class="b" style="left:19.5px;top:437px;width:11.5px;height:1px;background-image:linear-gradient(90deg,#9a9a9a 50%,transparent 50%);background-size:2px 1px;"></div>
<div class="b" style="left:15px;top:430.8px;width:11px;height:11px;background:#fff;border:1px solid #9a9a9a;background:linear-gradient(135deg,#fff 30%,#e4e4e4);"></div><div class="b" style="left:17.5px;top:435.7px;width:6.5px;height:1.2px;background:#2a3f8f;"></div><div class="b" style="left:20px;top:433.1px;width:1.2px;height:6.5px;background:#2a3f8f;"></div>
<svg style="left:31px;top:429px" width="16" height="16" viewBox="0 0 16 16"><circle cx="8" cy="8" r="7" fill="#fff" stroke="#1e5aa8" stroke-width="1.500"/><path d="M8 8c-3-1-3.500-4-1.500-5.500c1.500 1 2 3 1.500 5.500c1-3 4-3.500 5.500-1.500c-1 1.500-3 2-5.500 1.500c3 1 3.500 4 1.500 5.500c-1.500-1-2-3-1.500-5.500c-1 3-4 3.500-5.500 1.500c1-1.500 3-2 5.500-1.500z" fill="#1e5aa8"/></svg>
<span class="t" style="left:54.90px;top:428.00px;height:18px;line-height:18px;font-size:14px;letter-spacing:-0.157px;">Belüftung</span>
<div class="b" style="left:19.5px;top:457px;width:11.5px;height:1px;background-image:linear-gradient(90deg,#9a9a9a 50%,transparent 50%);background-size:2px 1px;"></div>
<svg style="left:31px;top:449px" width="16" height="16" viewBox="0 0 16 16"><path d="M8 1v14M2 4.500l12 7M14 4.500l-12 7M6 2l2 2l2-2M6 14l2-2l2 2" fill="none" stroke="#1e5aa8" stroke-width="1.300"/></svg>
<span class="t" style="left:54.90px;top:448.00px;height:18px;line-height:18px;font-size:14px;letter-spacing:-0.247px;">Kühlung</span>
<div class="b" style="left:19.5px;top:477px;width:11.5px;height:1px;background-image:linear-gradient(90deg,#9a9a9a 50%,transparent 50%);background-size:2px 1px;"></div>
<svg style="left:31px;top:469px" width="16" height="16" viewBox="0 0 16 16"><path d="M0.500 9l4-4l9.500 9.500" fill="none" stroke="#c4262c" stroke-width="1.200"/><path d="M4.500 7.500l8 8" stroke="#111" stroke-width="1.200"/><path d="M10.500 0.500h5v5z" fill="#fdd835"/><path d="M8 5l2-2M10 7l2-2" stroke="#fdd835" stroke-width="1"/></svg>
<span class="t" style="left:54.90px;top:468.00px;height:18px;line-height:18px;font-size:14px;letter-spacing:-0.168px;">Photovoltaik-Anlage Pro</span>
<div class="b" style="left:19.5px;top:497px;width:11.5px;height:1px;background-image:linear-gradient(90deg,#9a9a9a 50%,transparent 50%);background-size:2px 1px;"></div>
<svg style="left:31px;top:489px" width="16" height="16" viewBox="0 0 16 16"><rect x="0" y="0" width="16" height="16" fill="#3f84bc"/><path d="M8 8l-5-5.500l1 5zM8 8l5.500-5l-5 1zM8 8l5 5.500l-1-5zM8 8l-5.500 5l5-1z" fill="#fff"/><path d="M1 1l14 14M15 1l-14 14" stroke="#d7e8f5" stroke-width=".700"/></svg>
<span class="t" style="left:54.90px;top:488.00px;height:18px;line-height:18px;font-size:14px;letter-spacing:-0.327px;">Windenergie-Anlage</span>
<div class="b" style="left:19.5px;top:517px;width:11.5px;height:1px;background-image:linear-gradient(90deg,#9a9a9a 50%,transparent 50%);background-size:2px 1px;"></div>
<svg style="left:31px;top:509px" width="16" height="16" viewBox="0 0 16 16"><rect x="4.500" y="2" width="7" height="13" rx="1" fill="#fff" stroke="#1a2a9a" stroke-width="1.200"/><rect x="6.500" y="0.500" width="3" height="1.500" fill="#1a2a9a"/><rect x="4.500" y="12.500" width="7" height="2.500" fill="#1a2a9a"/><path d="M8.800 4l-2 4h2.400l-2 3.500" fill="none" stroke="#1a2a9a" stroke-width="1.100"/></svg>
<span class="t" style="left:54.90px;top:508.00px;height:18px;line-height:18px;font-size:14px;letter-spacing:-0.138px;">Stromspeicher</span>
<div class="b" style="left:19.5px;top:537px;width:11.5px;height:1px;background-image:linear-gradient(90deg,#9a9a9a 50%,transparent 50%);background-size:2px 1px;"></div>
<div class="b" style="left:15px;top:530.8px;width:11px;height:11px;background:#fff;border:1px solid #9a9a9a;background:linear-gradient(135deg,#fff 30%,#e4e4e4);"></div><div class="b" style="left:17.5px;top:535.6999999999999px;width:6.5px;height:1.2px;background:#2a3f8f;"></div><div class="b" style="left:20px;top:533.0999999999999px;width:1.2px;height:6.5px;background:#2a3f8f;"></div>
<svg style="left:31px;top:529px" width="16" height="16" viewBox="0 0 16 16"><path d="M2.500 15.500c-2-1.500-2-12.500 0-14.500h11c2 2 2 13 0 14.500" fill="#fff" stroke="#000" stroke-width="1.200"/><path d="M5.500 6h5v4.500c0 1.500-1 2.500-2.500 2.500s-2.500-1-2.500-2.500z" fill="#000"/><path d="M6.500 3v3M9.500 3v3" stroke="#000" stroke-width="1.300"/><path d="M8 13v2.500h-5" fill="none" stroke="#000" stroke-width="1.100"/></svg>
<span class="t" style="left:54.90px;top:528.00px;height:18px;line-height:18px;font-size:14px;letter-spacing:-0.106px;">Energieträger/Verbrauchsdaten</span>
<div class="b" style="left:0px;top:1016px;width:369px;height:28px;background:linear-gradient(180deg,#f4f4f4 0%,#e4e4e4 35%,#cfcfcf 75%,#c0c0c0 100%);"></div>
<svg style="left:8px;top:1025px" width="11" height="10" viewBox="0 0 11 10"><path d="M1 1l4 4l-4 4M5.500 1l4 4l-4 4" fill="none" stroke="#1a1a1a" stroke-width="1.300"/></svg>
<span class="t" style="left:31.30px;top:1019.00px;height:23px;line-height:23px;font-size:17.5px;letter-spacing:0.048px;">Varianten</span>
<div class="b" style="left:0px;top:1050px;width:369px;height:28px;background:linear-gradient(180deg,#f4f4f4 0%,#e4e4e4 35%,#cfcfcf 75%,#c0c0c0 100%);"></div>
<svg style="left:8px;top:1059px" width="11" height="10" viewBox="0 0 11 10"><path d="M1 1l4 4l-4 4M5.500 1l4 4l-4 4" fill="none" stroke="#1a1a1a" stroke-width="1.300"/></svg>
<span class="t" style="left:31.30px;top:1053.00px;height:23px;line-height:23px;font-size:17.5px;">Beratung</span>
<div class="b" style="left:0px;top:1084px;width:369px;height:28px;background:linear-gradient(180deg,#f4f4f4 0%,#e4e4e4 35%,#cfcfcf 75%,#c0c0c0 100%);"></div>
<svg style="left:8px;top:1093px" width="11" height="10" viewBox="0 0 11 10"><path d="M1 1l4 4l-4 4M5.500 1l4 4l-4 4" fill="none" stroke="#1a1a1a" stroke-width="1.300"/></svg>
<span class="t" style="left:31.30px;top:1087.00px;height:23px;line-height:23px;font-size:17.5px;letter-spacing:-0.081px;">Ergebnisse, Grafiken, Berichte</span>
<div class="b" style="left:4px;top:1047px;width:360px;height:1px;background:#a8a8a8;"></div>
<div class="b" style="left:4px;top:1081px;width:360px;height:1px;background:#a8a8a8;"></div>
<div class="b" style="left:601px;top:92px;width:940.7px;height:30.3px;background:#676767;"></div>
<span class="t" style="left:870.00px;top:94.30px;height:27px;line-height:27px;font-size:20.5px;font-weight:bold;color:#fff;letter-spacing:0.622px;">Wärmebrücken Pro</span>
<div class="b" style="left:395px;top:122.3px;width:1146.7px;height:982px;background:#b4b4b4;"></div>
<div class="b" style="left:399px;top:126px;width:1139px;height:127px;background:#fff;"></div>
<div class="b" style="left:416px;top:148.3px;width:12px;height:12px;background:#fff;border:1.300px solid #b8282e;"></div><svg style="left:416px;top:148.3px" width="12" height="12" viewBox="0 0 12 12"><path d="M3.2 3.2L8.8 8.8M8.8 3.2L3.2 8.8" stroke="#b8282e" stroke-width="1.32"/><rect x="4.8" y="4.8" width="2.400" height="2.400" fill="#b8282e"/></svg>
<span class="t" style="left:473.30px;top:148.60px;height:18px;line-height:18px;font-size:14px;letter-spacing:-0.355px;">Bezeichnung</span>
<div class="b" style="left:554px;top:146.3px;width:965px;height:24.3px;background:#fff;border:1px solid #e6e6e6;border-bottom:1.300px solid #8a8a8a;border-radius:2px;"></div>
<span class="t" style="left:557.50px;top:148.60px;height:18px;line-height:18px;font-size:14px;letter-spacing:-0.126px;">Kellerboden Streifenfundament, Außenwand monolithisch, Bodenplatte innen- und außengedämmt</span>
<svg style="left:1497px;top:151px" width="16.5" height="16.5" viewBox="0 0 16 16"><rect width="16" height="16" fill="#003d8f"/><path d="M2.200 11l7.600-7.600l2.800 2.800l-7.600 7.600z" fill="#fff"/><path d="M10.600 2.600l1-1c.4-.4 1-.4 1.400 0l1.400 1.400c.4.400.400 1 0 1.400l-1 1z" fill="#fff"/><path d="M1 15l.700-3.200l2.500 2.500z" fill="#fff"/></svg>
<div class="b" style="left:426px;top:170px;width:382px;height:70px;border:4px solid #fe0000;"></div>
<span class="t" style="left:437.00px;top:178.00px;height:18px;line-height:18px;font-size:14px;letter-spacing:-0.259px;">Nachweisverfahren</span>
<div class="b" style="left:554px;top:176.7px;width:250px;height:24.3px;background:#cde4f7;border:1px solid #8cbfea;border-bottom:1.300px solid #2a6fb5;border-radius:2px 2px 0 0;"></div>
<span class="t" style="left:558.30px;top:179.60px;height:18px;line-height:18px;font-size:14px;letter-spacing:-0.363px;">bildlich (Geometrie/Materialien)</span>
<svg style="left:789px;top:185.5px" width="10" height="7" viewBox="0 0 10 7"><path d="M0.500 1l4.500 4.500l4.500-4.500" fill="none" stroke="#333" stroke-width="1"/></svg>
<div class="b" style="left:554px;top:201.3px;width:250px;height:34.7px;background:#fff;border:1px solid #767676;border-right:none;border-bottom:none;"></div>
<div class="b" style="left:555px;top:202.5px;width:249px;height:16.3px;background:#0078d7;"></div>
<span class="t" style="left:557.50px;top:202.00px;height:18px;line-height:18px;font-size:14px;color:#fff;letter-spacing:-0.379px;">bildlich (Geometrie/Materialien)</span>
<span class="t" style="left:557.50px;top:219.00px;height:18px;line-height:18px;font-size:14px;letter-spacing:-0.133px;">rechnerisch (Psi-Wert)</span>
<div class="b" style="left:841.5px;top:182.3px;width:16.3px;height:16px;background:#f6f6f6;border:1px solid #5f5f5f;border-radius:3.500px;"></div>
<span class="t" style="left:861.60px;top:182.00px;height:18px;line-height:18px;font-size:14px;letter-spacing:-0.182px;">Gleichwertigkeit auf alternativem Weg eingehalten</span>
<div class="b" style="left:399px;top:261px;width:406.20000000000005px;height:97px;background:#fff;"></div>
<span class="t" style="left:474.20px;top:272.30px;height:18px;line-height:18px;font-size:14px;letter-spacing:-0.397px;">Katalog</span>
<span class="t" style="left:528.30px;top:271.80px;height:19px;line-height:19px;font-size:14.5px;font-weight:bold;letter-spacing:0.661px;">DIN 4108 Bbl. 2 (2019) / Nr. 2</span>
<span class="t" style="left:665.30px;top:302.50px;height:18px;line-height:18px;font-size:14px;letter-spacing:-0.279px;">Kategorie</span>
<span class="t" style="left:727.70px;top:302.00px;height:19px;line-height:19px;font-size:14.5px;font-weight:bold;">A</span>
<div class="b" style="left:399px;top:365.7px;width:406.20000000000005px;height:404.5px;background:#fff;"></div>
<div class="b" style="left:812px;top:259px;width:726px;height:319.2px;background:#fff;"></div>
<div class="b" style="left:812px;top:259px;width:726px;height:30px;background:#f2f2f2;"></div>
<span class="t" style="left:825.40px;top:265.70px;height:19px;line-height:19px;font-size:14.5px;font-weight:bold;letter-spacing:0.259px;">konstruktives Grundprinzip / R-Wert</span>
<div class="b" style="left:812px;top:315.6px;width:692.2px;height:26.69999999999999px;background:#99d1ff;"></div>
<div class="b" style="left:812px;top:369.1px;width:692.2px;height:26.899999999999977px;background:#ffffe1;"></div>
<div class="b" style="left:812px;top:315.1px;width:692.2px;height:1px;background:rgba(120,120,120,0.160);"></div>
<div class="b" style="left:812px;top:341.8px;width:692.2px;height:1px;background:rgba(120,120,120,0.160);"></div>
<div class="b" style="left:812px;top:368.6px;width:692.2px;height:1px;background:rgba(120,120,120,0.160);"></div>
<div class="b" style="left:812px;top:395.5px;width:692.2px;height:1px;background:rgba(120,120,120,0.160);"></div>
<div class="b" style="left:812px;top:422.7px;width:692.2px;height:1px;background:rgba(120,120,120,0.160);"></div>
<div class="b" style="left:1071.9px;top:289px;width:1px;height:134.2px;background:rgba(120,120,120,0.180);"></div>
<div class="b" style="left:1152.9px;top:289px;width:1px;height:134.2px;background:rgba(120,120,120,0.180);"></div>
<div class="b" style="left:1203.8px;top:289px;width:1px;height:134.2px;background:rgba(120,120,120,0.180);"></div>
<div class="b" style="left:1285.0px;top:289px;width:1px;height:134.2px;background:rgba(120,120,120,0.180);"></div>
<div class="b" style="left:1336.0px;top:289px;width:1px;height:134.2px;background:rgba(120,120,120,0.180);"></div>
<div class="b" style="left:1386.9px;top:289px;width:1px;height:134.2px;background:rgba(120,120,120,0.180);"></div>
<div class="b" style="left:1438.3px;top:289px;width:1px;height:134.2px;background:rgba(120,120,120,0.180);"></div>
<div class="b" style="left:1503.7px;top:289px;width:1px;height:134.2px;background:rgba(120,120,120,0.180);"></div>
<span class="t" style="left:813.70px;top:293.80px;height:18px;line-height:18px;font-size:14px;color:#5a5a5a;">Baustoff</span>
<span class="t" style="left:1110.00px;top:293.80px;height:18px;line-height:18px;font-size:14px;color:#5a5a5a;letter-spacing:-0.221px;">d (Soll)</span>
<span class="t" style="left:1165.70px;top:293.80px;height:18px;line-height:18px;font-size:14px;letter-spacing:0.420px;">d (Ist)</span>
<span class="t" style="left:1242.70px;top:293.80px;height:18px;line-height:18px;font-size:14px;color:#5a5a5a;letter-spacing:-0.123px;">λ (Soll)</span>
<span class="t" style="left:1298.30px;top:293.80px;height:18px;line-height:18px;font-size:14px;letter-spacing:0.501px;">λ (Ist)</span>
<span class="t" style="left:1343.20px;top:293.80px;height:18px;line-height:18px;font-size:14px;color:#5a5a5a;letter-spacing:-0.453px;">R (Soll)</span>
<span class="t" style="left:1398.80px;top:293.80px;height:18px;line-height:18px;font-size:14px;letter-spacing:0.116px;">R (Ist)</span>
<span class="t" style="left:1464.40px;top:293.80px;height:18px;line-height:18px;font-size:14px;color:#5a5a5a;letter-spacing:0.414px;">ok</span>
<span class="t" style="left:813.70px;top:320.25px;height:18px;line-height:18px;font-size:14px;color:#5a5a5a;letter-spacing:-0.024px;">Estrichdämmung/Trittschalldämmung</span>
<span class="t" style="left:1121.60px;top:320.25px;height:18px;line-height:18px;font-size:14px;color:#5a5a5a;letter-spacing:0.951px;">≥ 60</span>
<span class="t" style="left:1193.80px;top:320.25px;height:18px;line-height:18px;font-size:14px;">0</span>
<span class="t" style="left:1234.00px;top:320.25px;height:18px;line-height:18px;font-size:14px;color:#5a5a5a;letter-spacing:0.465px;">≤ 0,035</span>
<span class="t" style="left:1298.30px;top:320.25px;height:18px;line-height:18px;font-size:14px;letter-spacing:0.241px;">0,000</span>
<span class="t" style="left:1350.00px;top:320.25px;height:18px;line-height:18px;font-size:14px;color:#5a5a5a;letter-spacing:0.016px;">1,714</span>
<span class="t" style="left:1400.00px;top:320.25px;height:18px;line-height:18px;font-size:14px;letter-spacing:0.441px;">0,000</span>
<div class="b" style="left:1461.2px;top:318.15000000000003px;width:21.9px;height:21.9px;background:#fff;"></div><div class="b" style="left:1464px;top:320.95000000000005px;width:16.3px;height:16.3px;background:#fff;border:1.300px solid #b8282e;"></div><svg style="left:1464px;top:320.95000000000005px" width="16.3" height="16.3" viewBox="0 0 16.3 16.3"><path d="M4.4 4.4L11.9 11.9M11.9 4.4L4.4 11.9" stroke="#b8282e" stroke-width="1.79"/><rect x="7.0" y="7.0" width="2.400" height="2.400" fill="#b8282e"/></svg>
<span class="t" style="left:813.70px;top:347.00px;height:18px;line-height:18px;font-size:14px;color:#5a5a5a;letter-spacing:-0.056px;">Dämmung Bodenplatte unterseitig</span>
<span class="t" style="left:1121.60px;top:347.00px;height:18px;line-height:18px;font-size:14px;color:#5a5a5a;letter-spacing:0.951px;">≥ 40</span>
<span class="t" style="left:1193.80px;top:347.00px;height:18px;line-height:18px;font-size:14px;">0</span>
<span class="t" style="left:1234.00px;top:347.00px;height:18px;line-height:18px;font-size:14px;color:#5a5a5a;letter-spacing:0.465px;">≤ 0,040</span>
<span class="t" style="left:1298.30px;top:347.00px;height:18px;line-height:18px;font-size:14px;letter-spacing:0.241px;">0,000</span>
<span class="t" style="left:1350.00px;top:347.00px;height:18px;line-height:18px;font-size:14px;color:#5a5a5a;letter-spacing:0.016px;">1,000</span>
<span class="t" style="left:1400.00px;top:347.00px;height:18px;line-height:18px;font-size:14px;letter-spacing:0.441px;">0,000</span>
<div class="b" style="left:1464px;top:347.70000000000005px;width:16.3px;height:16.3px;background:#fff;border:1.300px solid #b8282e;"></div><svg style="left:1464px;top:347.70000000000005px" width="16.3" height="16.3" viewBox="0 0 16.3 16.3"><path d="M4.4 4.4L11.9 11.9M11.9 4.4L4.4 11.9" stroke="#b8282e" stroke-width="1.79"/><rect x="7.0" y="7.0" width="2.400" height="2.400" fill="#b8282e"/></svg>
<span class="t" style="left:813.70px;top:373.85px;height:18px;line-height:18px;font-size:14px;color:#5a5a5a;letter-spacing:0.008px;">Mauerwerk [4]</span>
<span class="t" style="left:1114.00px;top:373.85px;height:18px;line-height:18px;font-size:14px;color:#5a5a5a;letter-spacing:0.667px;">≥ 240</span>
<span class="t" style="left:1193.80px;top:373.85px;height:18px;line-height:18px;font-size:14px;">0</span>
<span class="t" style="left:1210.20px;top:373.85px;height:18px;line-height:18px;font-size:14px;color:#5a5a5a;letter-spacing:0.198px;">0,120 - 0,...</span>
<span class="t" style="left:1298.30px;top:373.85px;height:18px;line-height:18px;font-size:14px;letter-spacing:0.241px;">0,000</span>
<span class="t" style="left:1350.00px;top:373.85px;height:18px;line-height:18px;font-size:14px;color:#5a5a5a;letter-spacing:0.016px;">1,143</span>
<span class="t" style="left:1400.00px;top:373.85px;height:18px;line-height:18px;font-size:14px;letter-spacing:0.441px;">0,000</span>
<div class="b" style="left:1462.2px;top:372.75px;width:19.900000000000002px;height:19.900000000000002px;background:#fff;"></div><div class="b" style="left:1464px;top:374.55px;width:16.3px;height:16.3px;background:#fff;border:1.300px solid #b8282e;"></div><svg style="left:1464px;top:374.55px" width="16.3" height="16.3" viewBox="0 0 16.3 16.3"><path d="M4.4 4.4L11.9 11.9M11.9 4.4L4.4 11.9" stroke="#b8282e" stroke-width="1.79"/><rect x="7.0" y="7.0" width="2.400" height="2.400" fill="#b8282e"/></svg>
<span class="t" style="left:813.70px;top:400.90px;height:18px;line-height:18px;font-size:14px;color:#5a5a5a;letter-spacing:-0.148px;">Erdreich</span>
<span class="t" style="left:1105.70px;top:400.90px;height:18px;line-height:18px;font-size:14px;color:#5a5a5a;letter-spacing:0.636px;">≥ 1000</span>
<span class="t" style="left:1193.80px;top:400.90px;height:18px;line-height:18px;font-size:14px;">0</span>
<span class="t" style="left:1234.00px;top:400.90px;height:18px;line-height:18px;font-size:14px;color:#5a5a5a;letter-spacing:0.465px;">≤ 2,000</span>
<span class="t" style="left:1298.30px;top:400.90px;height:18px;line-height:18px;font-size:14px;letter-spacing:0.241px;">0,000</span>
<span class="t" style="left:1400.00px;top:400.90px;height:18px;line-height:18px;font-size:14px;letter-spacing:0.441px;">0,000</span>
<div class="b" style="left:1464px;top:401.6px;width:16.3px;height:16.3px;background:#fff;border:1.300px solid #b8282e;"></div><svg style="left:1464px;top:401.6px" width="16.3" height="16.3" viewBox="0 0 16.3 16.3"><path d="M4.4 4.4L11.9 11.9M11.9 4.4L4.4 11.9" stroke="#b8282e" stroke-width="1.79"/><rect x="7.0" y="7.0" width="2.400" height="2.400" fill="#b8282e"/></svg>
<div class="b" style="left:812px;top:586px;width:726px;height:185px;background:#fff;"></div>
<div class="b" style="left:812px;top:586px;width:726px;height:30px;background:#f2f2f2;"></div>
<div class="b" style="left:812px;top:586px;width:62px;height:30px;background:#aad22f;"></div>
<svg style="left:819px;top:590.5px" width="16" height="16" viewBox="0 0 16 16"><rect x="1" y="0.500" width="14" height="14" fill="#0a0a14"/><rect x="3" y="0.500" width="10" height="2" fill="#d32f2f"/><rect x="3" y="2.500" width="10" height="5.500" fill="#fff"/><rect x="6" y="9.500" width="7" height="5" fill="#e8e8e8"/><rect x="7" y="10.500" width="3" height="3" fill="#0a0a14"/></svg>
<svg style="left:849.5px;top:589.5px" width="17" height="17" viewBox="0 0 17 17"><path d="M0.600 0.600h5l2 2v10.500h-1.500v-1.500h-1.500v-1.500h-4z" fill="#fff" stroke="#000" stroke-width="1.100"/><path d="M2.500 0.600v11M4.500 1v12" stroke="#000" stroke-width="1"/><path d="M6.700 4h6l3 3v9h-9z" fill="#fff" stroke="#000" stroke-width="1.200"/><path d="M8.500 6.500h3M8.500 9h5.500M8.500 11.500h5.500M8.500 14h4" stroke="#000" stroke-width="1.100"/></svg>
<span class="t" style="left:888.20px;top:592.50px;height:19px;line-height:19px;font-size:14.5px;font-weight:bold;letter-spacing:-0.190px;">Beschreibung</span>
<svg style="left:1514.5px;top:591px" width="18.5" height="18.5" viewBox="0 0 16 16"><rect width="16" height="16" fill="#003d8f"/><path d="M2.200 11l7.600-7.600l2.800 2.800l-7.600 7.600z" fill="#fff"/><path d="M10.600 2.600l1-1c.4-.4 1-.4 1.400 0l1.400 1.400c.4.400.400 1 0 1.400l-1 1z" fill="#fff"/><path d="M1 15l.700-3.200l2.500 2.500z" fill="#fff"/></svg>
<div class="b" style="left:399px;top:778px;width:1139px;height:322px;background:#fff;"></div>
<div class="b" style="left:399px;top:778px;width:1139px;height:29.8px;background:#f2f2f2;"></div>
<span class="t" style="left:412.70px;top:784.40px;height:19px;line-height:19px;font-size:14.5px;font-weight:bold;letter-spacing:0.131px;">Bemerkungen</span>
<div class="b" style="left:1541.7px;top:92px;width:5.6px;height:1012px;background:#f0f0f0;"></div>
<div class="b" style="left:1547.5px;top:92.7px;width:283px;height:24px;background:#fdfdfd;border:1px solid #e2e2e2;border-bottom:1.300px solid #9a9a9a;border-radius:3px;"></div>
<span class="t" style="left:1551.50px;top:95.70px;height:19px;line-height:19px;font-size:14.5px;color:#111;letter-spacing:-0.182px;">Umbau auf Luft/Luft-Wärmepumpe (7)</span>
<svg style="left:1815.500px;top:101.500px" width="10" height="7" viewBox="0 0 10 7"><path d="M0.500 1l4.500 4.500l4.500-4.500" fill="none" stroke="#444" stroke-width="1"/></svg>
<div class="b" style="left:1833px;top:94.4px;width:19.5px;height:20.2px;background:#fdfdfd;border:1px solid #d6d6d6;border-radius:3.500px;"></div>
<svg style="left:1835px;top:96.800px" width="16" height="16.200" viewBox="0 0 16 16"><rect width="16" height="16" fill="#003d8f"/><path d="M2.200 11l7.600-7.600l2.800 2.800l-7.600 7.600z" fill="#fff"/><path d="M10.600 2.600l1-1c.400-.400 1-.400 1.400 0l1.400 1.400c.400.400.400 1 0 1.400l-1 1z" fill="#fff"/><path d="M1 15l.700-3.200l2.500 2.500z" fill="#fff"/></svg>
<div class="b" style="left:1546.7px;top:119.8px;width:299px;height:957px;background:#808080;"></div>
<div class="b" style="left:1846px;top:119.8px;width:17px;height:957px;background:#fbfbfb;"></div>
<svg style="left:1849px;top:126px" width="13" height="10" viewBox="0 0 13 10"><path d="M6.500 0.800l5.700 8.400h-11.400z" fill="#8a8a8a" stroke="#8a8a8a" stroke-width="1" stroke-linejoin="round"/></svg>
<svg style="left:1850px;top:1063.500px" width="12" height="10" viewBox="0 0 12 10"><path d="M1 1h10l-5 7.500z" fill="#8a8a8a" stroke="#8a8a8a" stroke-width="1" stroke-linejoin="round"/></svg>
<div class="b" style="left:1850px;top:143px;width:11px;height:847px;background:#8a8a8a;border-radius:5.500px;"></div>
<div class="b" style="left:1550px;top:123px;width:293px;height:473.29999999999995px;background:#fff;"></div>
<div class="b" style="left:1550px;top:602.8px;width:293px;height:145.0px;background:#fff;"></div>
<div class="b" style="left:1550px;top:753.9px;width:293px;height:99.80000000000007px;background:#fff;"></div>
<div class="b" style="left:1550px;top:859.7px;width:293px;height:137.0px;background:#fff;"></div>
<div class="b" style="left:1550px;top:1003px;width:293px;height:73.79999999999995px;background:#fff;"></div>
<span class="t" style="left:1562.50px;top:132.20px;height:32px;line-height:32px;font-size:25px;color:#1c1c28;letter-spacing:0.096px;">GEG 2024</span>
<span class="t" style="left:1562.50px;top:162.30px;height:24px;line-height:24px;font-size:18.75px;color:#1c1c28;letter-spacing:0.114px;">DIN V 18599</span>
<div class="b" style="left:1798.7px;top:139.10000000000002px;width:25.4px;height:25.4px;background:#86b41b;border-radius:50%;"></div>
<div class="b" style="left:1568.3px;top:192px;width:254px;height:190.89999999999998px;background:#fff;box-shadow:1px 1px 3px rgba(0,0,0,.450);"></div><div class="b" style="left:1568.3px;top:192px;width:20.5px;height:190.89999999999998px;background:#d3d3d3;"></div>
<div class="b" style="left:1594px;top:192px;width:228.3px;height:190.9px;background:#5a9800;"></div>
<svg style="left:1594px;top:192px;filter:drop-shadow(1px 1px 1.200px rgba(0,0,0,.500))" width="228" height="191" viewBox="1594 192 228 191" fill="#fff">
<path fill-rule="evenodd" d="M1603.100 341.900L1647.300 216.600H1669.600L1713.200 341.900H1695L1682.100 304.800H1634.400L1621.300 341.900ZM1639.400 290.500H1677.100L1658.400 235.100Z"/>
<path d="M1759.100 260.200H1771.700V296H1807.500V308.100H1771.700V344.100H1759.100V308.100H1723V296H1759.100Z"/>
</svg>
<span class="t" style="left:1672.30px;top:351.90px;height:24px;line-height:24px;font-size:18.75px;font-weight:bold;color:#fff;text-shadow:1px 1px 1.500px rgba(0,0,0,.550);">12,9</span>
<span class="t" style="left:1713.20px;top:351.90px;height:24px;line-height:24px;font-size:18.75px;color:#fff;letter-spacing:0.289px;text-shadow:1px 1px 1.500px rgba(0,0,0,.550);">kWh/(m²a)</span>
<span class="t" style="left:1536.25px;top:278.50px;height:18px;line-height:18px;font-size:13.5px;color:#1c1c28;transform:rotate(-90deg);transform-origin:50% 50%;width:84.10px;letter-spacing:-0.353px;">Effizienzklasse</span>
<div class="b" style="left:1568.3px;top:391px;width:254px;height:71.60000000000002px;background:#fff;box-shadow:1px 1px 3px rgba(0,0,0,.450);"></div><div class="b" style="left:1568.3px;top:391px;width:20.5px;height:71.60000000000002px;background:#d3d3d3;"></div>
<div class="b" style="left:1594.2px;top:391px;width:136.5px;height:24px;background:#d3d3d3;"></div>
<div class="b" style="left:1594.2px;top:415.2px;width:191.2px;height:23.6px;background:#3f84b8;"></div>
<div class="b" style="left:1594.2px;top:438.8px;width:44.3px;height:23.8px;background:linear-gradient(90deg,#5a9800,#a3cd2e);"></div>
<span class="t" style="left:1601.30px;top:395.60px;height:16px;line-height:16px;font-size:12.5px;color:#1c1c28;letter-spacing:0.105px;">71,8 kWh/(m²a)</span>
<span class="t" style="left:1601.30px;top:418.90px;height:16px;line-height:16px;font-size:12.5px;color:#1c1c28;letter-spacing:0.101px;">100,5 kWh/(m²a)</span>
<span class="t" style="left:1601.30px;top:442.80px;height:16px;line-height:16px;font-size:12.5px;color:#1c1c28;letter-spacing:0.105px;">23,2 kWh/(m²a)</span>
<span class="t" style="left:1572.55px;top:421.00px;height:18px;line-height:18px;font-size:13.5px;color:#1c1c28;transform:rotate(-90deg);transform-origin:50% 50%;width:10.50px;">Q</span>
<span class="t" style="left:1576.63px;top:413.30px;height:14px;line-height:14px;font-size:11px;color:#1c1c28;transform:rotate(-90deg);transform-origin:50% 50%;width:7.34px;">P</span>
<div class="b" style="left:1568.3px;top:471.3px;width:254px;height:71.69999999999999px;background:#fff;box-shadow:1px 1px 3px rgba(0,0,0,.450);"></div><div class="b" style="left:1568.3px;top:471.3px;width:20.5px;height:71.69999999999999px;background:#d3d3d3;"></div>
<div class="b" style="left:1594.2px;top:471.3px;width:116px;height:23.8px;background:#d3d3d3;"></div>
<div class="b" style="left:1594.2px;top:495.2px;width:193.6px;height:23.4px;background:#3f84b8;"></div>
<div class="b" style="left:1594.2px;top:518.6px;width:76.9px;height:24.4px;background:linear-gradient(90deg,#5a9800,#a3cd2e 70%,#c9dc3a);"></div>
<span class="t" style="left:1601.30px;top:475.00px;height:16px;line-height:16px;font-size:12.5px;color:#1c1c28;letter-spacing:0.153px;">0,42 W/(m²K)</span>
<span class="t" style="left:1601.30px;top:498.70px;height:16px;line-height:16px;font-size:12.5px;color:#1c1c28;letter-spacing:0.153px;">0,70 W/(m²K)</span>
<span class="t" style="left:1601.30px;top:522.60px;height:16px;line-height:16px;font-size:12.5px;color:#1c1c28;letter-spacing:0.153px;">0,28 W/(m²K)</span>
<span class="t" style="left:1572.93px;top:501.50px;height:18px;line-height:18px;font-size:13.5px;color:#1c1c28;transform:rotate(-90deg);transform-origin:50% 50%;width:9.75px;">H</span>
<span class="t" style="left:1573.83px;top:491.00px;height:17px;line-height:17px;font-size:13px;color:#1c1c28;transform:rotate(-90deg);transform-origin:50% 50%;width:7.94px;">T</span>
<div class="b" style="left:1568.3px;top:551.2px;width:254px;height:25.0px;background:#fff;box-shadow:1px 1px 3px rgba(0,0,0,.450);"></div><div class="b" style="left:1568.3px;top:551.2px;width:20.5px;height:25.0px;background:#d3d3d3;"></div>
<div class="b" style="left:1594.2px;top:551.2px;width:49.899999999999864px;height:25px;background:#b52025;"></div>
<div class="b" style="left:1647.2px;top:551.2px;width:18.899999999999864px;height:25px;background:#86b41b;"></div>
<div class="b" style="left:1669.1px;top:551.2px;width:18.700000000000045px;height:25px;background:#86b41b;"></div>
<div class="b" style="left:1691.1px;top:551.2px;width:18.90000000000009px;height:25px;background:#86b41b;"></div>
<div class="b" style="left:1713.3px;top:551.2px;width:105.79999999999995px;height:25px;background:#b52025;"></div>
<span class="t" style="left:1629.10px;top:556.20px;height:16px;line-height:16px;font-size:12.5px;font-weight:bold;color:#fff;">40</span>
<span class="t" style="left:1651.30px;top:556.20px;height:16px;line-height:16px;font-size:12.5px;font-weight:bold;color:#fff;">55</span>
<span class="t" style="left:1673.10px;top:556.20px;height:16px;line-height:16px;font-size:12.5px;font-weight:bold;color:#fff;">70</span>
<span class="t" style="left:1695.10px;top:556.20px;height:16px;line-height:16px;font-size:12.5px;font-weight:bold;color:#fff;">85</span>
<span class="t" style="left:1797.14px;top:556.20px;height:16px;line-height:16px;font-size:12.5px;font-weight:bold;color:#fff;">160</span>
<span class="t" style="left:1568.80px;top:555.20px;height:17px;line-height:17px;font-size:13px;color:#1c1c28;transform:rotate(-90deg);transform-origin:50% 50%;width:18.00px;letter-spacing:-0.060px;">EH</span>
<span class="t" style="left:1563.00px;top:613.70px;height:32px;line-height:32px;font-size:25px;color:#1c1c28;letter-spacing:0.102px;">Erneuerbare</span>
<span class="t" style="left:1563.00px;top:643.10px;height:32px;line-height:32px;font-size:25px;color:#1c1c28;letter-spacing:0.017px;">Energien</span>
<div class="b" style="left:1798.7px;top:618.4px;width:25.4px;height:25.4px;background:#86b41b;border-radius:50%;"></div>
<div class="b" style="left:1568.3px;top:680px;width:254px;height:47px;background:#fff;box-shadow:1px 1px 3px rgba(0,0,0,.450);"></div><div class="b" style="left:1568.3px;top:680px;width:20.5px;height:47px;background:#d3d3d3;"></div>
<div class="b" style="left:1594.4px;top:680px;width:147.6px;height:23.3px;background:#d3d3d3;"></div>
<div class="b" style="left:1594.4px;top:703.3px;width:228px;height:23.7px;background:linear-gradient(90deg,#b52025 0%,#e0712a 22%,#fdd630 50%,#a6cd2f 75%,#5a9800 100%);"></div>
<span class="t" style="left:1600.60px;top:683.70px;height:16px;line-height:16px;font-size:12.5px;color:#1c1c28;letter-spacing:0.603px;">65 %</span>
<span class="t" style="left:1600.60px;top:708.20px;height:16px;line-height:16px;font-size:12.5px;color:#1c1c28;letter-spacing:0.539px;">100 %</span>
<span class="t" style="left:1569.05px;top:695.00px;height:17px;line-height:17px;font-size:13px;color:#1c1c28;transform:rotate(-90deg);transform-origin:50% 50%;width:17.50px;letter-spacing:0.157px;">EE</span>
<span class="t" style="left:1563.00px;top:763.80px;height:32px;line-height:32px;font-size:25px;color:#1c1c28;letter-spacing:0.118px;">Sommerlicher</span>
<span class="t" style="left:1563.00px;top:793.90px;height:32px;line-height:32px;font-size:25px;color:#1c1c28;letter-spacing:0.019px;">Wärmeschutz</span>
<span class="t" style="left:1563.00px;top:824.80px;height:24px;line-height:24px;font-size:18.75px;color:#1c1c28;letter-spacing:0.157px;">DIN 4108-2</span>
<div class="b" style="left:1798.7px;top:769.8px;width:25.4px;height:25.4px;background:#fff;border-radius:50%;border:1.200px solid #1c1c1c;"></div>
<span class="t" style="left:1562.50px;top:869.00px;height:32px;line-height:32px;font-size:25px;color:#1c1c28;letter-spacing:0.080px;">Lüftungskonzept</span>
<span class="t" style="left:1562.50px;top:899.90px;height:24px;line-height:24px;font-size:18.75px;color:#1c1c28;letter-spacing:0.213px;">DIN 1946-6</span>
<div class="b" style="left:1798.7px;top:875.5999999999999px;width:25.4px;height:25.4px;background:#86b41b;border-radius:50%;"></div>
<div class="b" style="left:1568.3px;top:928.5px;width:254px;height:47.799999999999955px;background:#fff;box-shadow:1px 1px 3px rgba(0,0,0,.450);"></div><div class="b" style="left:1568.3px;top:928.5px;width:20.5px;height:47.799999999999955px;background:#d3d3d3;"></div>
<div class="b" style="left:1594.3px;top:928.5px;width:113.5px;height:23.4px;background:#d3d3d3;"></div>
<div class="b" style="left:1594.3px;top:952.8px;width:39.4px;height:23.5px;background:linear-gradient(90deg,#3f84b8 55%,#6ea5cf);"></div>
<span class="t" style="left:1600.70px;top:932.60px;height:16px;line-height:16px;font-size:12.5px;color:#1c1c28;letter-spacing:0.370px;">39 m³/h</span>
<span class="t" style="left:1600.70px;top:957.00px;height:16px;line-height:16px;font-size:12.5px;color:#1c1c28;letter-spacing:0.370px;">13 m³/h</span>
<span class="t" style="left:1558.80px;top:944.00px;height:17px;line-height:17px;font-size:13px;color:#1c1c28;transform:rotate(-90deg);transform-origin:50% 50%;width:38.00px;letter-spacing:-0.048px;">inf min</span>
<span class="t" style="left:1562.50px;top:1013.10px;height:32px;line-height:32px;font-size:25px;color:#1c1c28;letter-spacing:-0.010px;">Beratung</span>
<span class="t" style="left:1562.50px;top:1042.20px;height:24px;line-height:24px;font-size:18.75px;color:#1c1c28;letter-spacing:0.164px;">DIN V 18599</span>
<div class="b" style="left:1560px;top:1066px;width:270px;height:10.800px;overflow:hidden;">
<div class="b" style="left:8.3px;top:6px;width:254px;height:30px;background:#fff;box-shadow:1px 1px 3px rgba(0,0,0,.450);"></div><div class="b" style="left:8.3px;top:6px;width:20.5px;height:30px;background:#d3d3d3;"></div><div class="b" style="left:34.3px;top:6px;width:12.9px;height:30px;background:#5a9800;"></div><div class="b" style="left:13px;top:9.3px;width:6.5px;height:1.5px;background:#222;"></div>
</div>
<div class="b" style="left:1541.7px;top:1076.8px;width:322px;height:28px;background:#f0f0f0;"></div>
<svg style="left:399px;top:366px" width="406" height="404" viewBox="399 366 406 404">
<path d="M492.5 440.6H498.5M492.5 444.0H498.5M492.5 447.4H498.5M499.5 450.2H508.1M499.5 453.6H508.1M509.1 440.6H517.7M509.1 444.0H517.7M509.1 447.4H517.7M518.7 450.2H527.3M518.7 453.6H527.3M528.3 440.6H536.9M528.3 444.0H536.9M528.3 447.4H536.9M537.9 450.2H546.5M537.9 453.6H546.5M547.5 440.6H556.1M547.5 444.0H556.1M547.5 447.4H556.1M537.9 457.0H546.5M537.9 469.4H546.5M537.9 472.8H546.5M537.9 476.2H546.5M537.9 488.6H546.5M537.9 492.0H546.5M537.9 495.4H546.5M537.9 507.8H546.5M537.9 511.2H546.5M537.9 514.6H546.5M537.9 527.0H546.5M537.9 530.4H546.5M537.9 533.8H546.5M547.5 459.8H556.1M547.5 463.2H556.1M547.5 466.6H556.1M547.5 479.0H556.1M547.5 482.4H556.1M547.5 485.8H556.1M547.5 498.2H556.1M547.5 501.6H556.1M547.5 505.0H556.1M547.5 517.4H556.1M547.5 520.8H556.1M547.5 524.2H556.1M494.2 449.3V455.5M497.6 449.3V455.5M500.4 439.7V448.3M503.8 439.7V448.3M507.2 439.7V448.3M510.0 449.3V455.5M513.4 449.3V455.5M516.8 449.3V455.5M519.6 439.7V448.3M523.0 439.7V448.3M526.4 439.7V448.3M529.2 449.3V455.5M532.6 449.3V455.5M536.0 449.3V455.5M538.8 439.7V448.3M542.2 439.7V448.3M545.6 439.7V448.3M548.4 449.3V455.5M551.8 449.3V455.5M555.2 449.3V455.5M538.8 458.9V467.5M542.2 458.9V467.5M545.6 458.9V467.5M538.8 478.1V486.7M542.2 478.1V486.7M545.6 478.1V486.7M538.8 497.3V505.9M542.2 497.3V505.9M545.6 497.3V505.9M538.8 516.5V525.1M542.2 516.5V525.1M545.6 516.5V525.1M548.4 468.5V477.1M551.8 468.5V477.1M555.2 468.5V477.1M548.4 487.7V496.3M551.8 487.7V496.3M555.2 487.7V496.3M548.4 506.9V515.5M551.8 506.9V515.5M555.2 506.9V515.5M548.4 526.1V534.4M551.8 526.1V534.4M555.2 526.1V534.4" stroke="#262626" stroke-width="1.35" fill="none"/>
<path d="M524.7 537.0H533.3M524.7 549.4H533.3M524.7 552.8H533.3M524.7 556.2H533.3M524.7 568.6H533.3M524.7 572.0H533.3M524.7 575.4H533.3M524.7 587.8H533.3M524.7 591.2H533.3M524.7 594.6H533.3M524.7 607.0H533.3M524.7 610.4H533.3M524.7 613.8H533.3M524.7 626.2H533.3M524.7 629.6H533.3M524.7 633.0H533.3M534.3 539.8H538.8M534.3 543.2H538.8M534.3 546.6H538.8M534.3 559.0H538.8M534.3 562.4H538.8M534.3 565.8H538.8M534.3 578.2H538.8M534.3 581.6H538.8M534.3 585.0H538.8M534.3 597.4H538.8M534.3 600.8H538.8M534.3 604.2H538.8M534.3 616.6H538.8M534.3 620.0H538.8M534.3 623.4H538.8M534.3 635.8H538.8M534.3 639.2H538.8M538.8 620.0H542.9M538.8 623.4H542.9M538.8 635.8H542.9M538.8 639.2H542.9M543.9 626.2H552.5M543.9 629.6H552.5M543.9 633.0H552.5M553.5 620.0H562.1M553.5 623.4H562.1M553.5 635.8H562.1M553.5 639.2H562.1M563.1 626.2H571.7M563.1 629.6H571.7M563.1 633.0H571.7M572.7 620.0H581.3M572.7 623.4H581.3M572.7 635.8H581.3M572.7 639.2H581.3M582.3 626.2H590.9M582.3 629.6H590.9M582.3 633.0H590.9M591.9 620.0H600.5M591.9 623.4H600.5M591.9 635.8H600.5M591.9 639.2H600.5M601.5 626.2H610.1M601.5 629.6H610.1M601.5 633.0H610.1M611.1 620.0H619.7M611.1 623.4H619.7M611.1 635.8H619.7M611.1 639.2H619.7M620.7 626.2H626.8M620.7 629.6H626.8M620.7 633.0H626.8M611.1 565.8H619.7M611.1 578.2H619.7M611.1 581.6H619.7M611.1 585.0H619.7M611.1 597.4H619.7M611.1 600.8H619.7M611.1 604.2H619.7M611.1 616.6H619.7M620.7 568.6H626.8M620.7 572.0H626.8M620.7 575.4H626.8M620.7 587.8H626.8M620.7 591.2H626.8M620.7 594.6H626.8M620.7 607.0H626.8M620.7 610.4H626.8M620.7 613.8H626.8M611.1 543.2H619.7M611.1 546.6H619.7M611.1 559.0H619.7M611.1 562.4H619.7M620.7 549.4H629.3M620.7 552.8H629.3M620.7 556.2H629.3M630.3 543.2H638.9M630.3 546.6H638.9M630.3 559.0H638.9M630.3 562.4H638.9M639.9 549.4H648.5M639.9 552.8H648.5M639.9 556.2H648.5M649.5 543.2H658.1M649.5 546.6H658.1M649.5 559.0H658.1M649.5 562.4H658.1M659.1 549.4H667.7M659.1 552.8H667.7M659.1 556.2H667.7M668.7 543.2H677.3M668.7 546.6H677.3M668.7 559.0H677.3M668.7 562.4H677.3M678.3 549.4H686.9M678.3 552.8H686.9M678.3 556.2H686.9M687.9 543.2H696.5M687.9 546.6H696.5M687.9 559.0H696.5M687.9 562.4H696.5M522.8 548.5V557.1M522.8 567.7V576.3M522.8 586.9V595.5M522.8 606.1V614.7M522.8 625.3V633.9M525.6 538.9V547.5M529.0 538.9V547.5M532.4 538.9V547.5M525.6 558.1V566.7M529.0 558.1V566.7M532.4 558.1V566.7M525.6 577.3V585.9M529.0 577.3V585.9M532.4 577.3V585.9M525.6 596.5V605.1M529.0 596.5V605.1M532.4 596.5V605.1M525.6 615.7V624.3M529.0 615.7V624.3M532.4 615.7V624.3M525.6 634.9V641.7M529.0 634.9V641.7M532.4 634.9V641.7M535.2 548.5V557.1M535.2 567.7V576.3M535.2 586.9V595.5M535.2 606.1V614.7M535.2 625.3V633.9M542.0 625.3V633.9M544.8 618.5V624.3M548.2 618.5V624.3M551.6 618.5V624.3M544.8 634.9V641.7M548.2 634.9V641.7M551.6 634.9V641.7M554.4 625.3V633.9M557.8 625.3V633.9M561.2 625.3V633.9M564.0 618.5V624.3M567.4 618.5V624.3M570.8 618.5V624.3M564.0 634.9V641.7M567.4 634.9V641.7M570.8 634.9V641.7M573.6 625.3V633.9M577.0 625.3V633.9M580.4 625.3V633.9M583.2 618.5V624.3M586.6 618.5V624.3M590.0 618.5V624.3M583.2 634.9V641.7M586.6 634.9V641.7M590.0 634.9V641.7M592.8 625.3V633.9M596.2 625.3V633.9M599.6 625.3V633.9M602.4 618.5V624.3M605.8 618.5V624.3M609.2 618.5V624.3M602.4 634.9V641.7M605.8 634.9V641.7M609.2 634.9V641.7M612.0 625.3V633.9M615.4 625.3V633.9M618.8 625.3V633.9M621.6 618.5V624.3M625.0 618.5V624.3M621.6 634.9V641.7M625.0 634.9V641.7M612.0 567.7V576.3M615.4 567.7V576.3M618.8 567.7V576.3M612.0 586.9V595.5M615.4 586.9V595.5M618.8 586.9V595.5M612.0 606.1V614.7M615.4 606.1V614.7M618.8 606.1V614.7M621.6 577.3V585.9M625.0 577.3V585.9M621.6 596.5V605.1M625.0 596.5V605.1M621.6 615.7V618.5M625.0 615.7V618.5M612.0 548.5V557.1M615.4 548.5V557.1M618.8 548.5V557.1M621.6 542.6V547.5M625.0 542.6V547.5M628.4 542.6V547.5M621.6 558.1V565.4M625.0 558.1V565.4M628.4 558.1V565.4M631.2 548.5V557.1M634.6 548.5V557.1M638.0 548.5V557.1M640.8 542.6V547.5M644.2 542.6V547.5M647.6 542.6V547.5M640.8 558.1V565.4M644.2 558.1V565.4M647.6 558.1V565.4M650.4 548.5V557.1M653.8 548.5V557.1M657.2 548.5V557.1M660.0 542.6V547.5M663.4 542.6V547.5M666.8 542.6V547.5M660.0 558.1V565.4M663.4 558.1V565.4M666.8 558.1V565.4M669.6 548.5V557.1M673.0 548.5V557.1M676.4 548.5V557.1M679.2 542.6V547.5M682.6 542.6V547.5M686.0 542.6V547.5M679.2 558.1V565.4M682.6 558.1V565.4M686.0 558.1V565.4M688.8 548.5V557.1M692.2 548.5V557.1M695.6 548.5V557.1" stroke="#262626" stroke-width="1.35" fill="none"/>
<path d="M525 527H536M530.5 527V536" stroke="#1a1a1a" stroke-width="1.2" fill="none"/>
<path d="M579.6 417.2L591.0 428.6M568.4 417.2L591.0 439.8M557.7 417.7L591.0 451.0M557.7 428.9L591.0 462.2M557.7 440.1L591.0 473.4M557.7 451.3L591.0 484.6M557.7 462.5L591.0 495.8M557.7 473.7L582.3 498.3M557.7 484.9L571.1 498.3M557.7 496.1L559.9 498.3" stroke="#1a1a1a" stroke-width="1.1" fill="none"/>
<path d="M557.2 382.400V417" stroke="#1a1a1a" stroke-width="1"/><path d="M557.9 417.2V534.400" stroke="#1a1a1a" stroke-width="2"/>
<path d="M591 382.400V498.300" stroke="#1a1a1a" stroke-width="1"/><path d="M592.6 417.200V498.300M594.600 417.200V498.300" stroke="#1a1a1a" stroke-width="1.300"/>
<path d="M558.5 513.1L572.8 498.8M558.5 527.7L587.4 498.8M566.8 534.0L602.0 498.8M581.4 534.0L616.6 498.8M596.0 534.0L631.2 498.8M610.6 534.0L645.8 498.8M625.2 534.0L660.4 498.8M639.8 534.0L675.0 498.8M654.4 534.0L689.6 498.8M669.0 534.0L700.2 502.8M683.6 534.0L700.2 517.4M698.2 534.0L700.2 532.0" stroke="#1a1a1a" stroke-width="1.15" fill="none"/>
<g stroke="#1a1a1a" stroke-width="1.15" stroke-dasharray="6.5 2.6" fill="none"><path d="M558.5 505.8L565.5 498.8" stroke-dashoffset="0.9"/><path d="M558.5 520.4L580.1 498.8" stroke-dashoffset="8.7"/><path d="M559.5 534.0L594.7 498.8" stroke-dashoffset="8.9"/><path d="M574.1 534.0L609.3 498.8" stroke-dashoffset="1.1"/><path d="M588.7 534.0L623.9 498.8" stroke-dashoffset="2.3"/><path d="M603.3 534.0L638.5 498.8" stroke-dashoffset="3.5"/><path d="M617.9 534.0L653.1 498.8" stroke-dashoffset="4.7"/><path d="M632.5 534.0L667.7 498.8" stroke-dashoffset="6.0"/><path d="M647.1 534.0L682.3 498.8" stroke-dashoffset="7.2"/><path d="M661.7 534.0L696.9 498.8" stroke-dashoffset="8.4"/><path d="M676.3 534.0L700.2 510.1" stroke-dashoffset="0.5"/><path d="M690.9 534.0L700.2 524.7" stroke-dashoffset="1.7"/></g>
<path d="M557.200 498.300H594.5" stroke="#1a1a1a" stroke-width="2"/><path d="M594.5 498.300H700.2" stroke="#1a1a1a" stroke-width="1.3"/>
<path d="M595.5 484.5L597.0 483.0M595.5 487.8L600.2 483.0M597.9 488.6L603.5 483.0M601.1 488.6L606.8 483.0M604.4 488.6L610.0 483.0M607.6 488.6L613.2 483.0M610.9 488.6L616.5 483.0M614.1 488.6L619.8 483.0M617.4 488.6L623.0 483.0M620.6 488.6L626.2 483.0M623.9 488.6L629.5 483.0M627.1 488.6L632.8 483.0M630.4 488.6L636.0 483.0M633.6 488.6L639.2 483.0M636.9 488.6L642.5 483.0M640.1 488.6L645.8 483.0M643.4 488.6L649.0 483.0M646.6 488.6L652.2 483.0M649.9 488.6L655.5 483.0M653.1 488.6L658.8 483.0M656.4 488.6L662.0 483.0M659.6 488.6L665.2 483.0M662.9 488.6L668.5 483.0M666.1 488.6L671.8 483.0M669.4 488.6L675.0 483.0M672.6 488.6L678.2 483.0M675.9 488.6L681.5 483.0M679.1 488.6L684.8 483.0M682.4 488.6L688.0 483.0M685.6 488.6L691.2 483.0M688.9 488.6L694.5 483.0M692.1 488.6L697.8 483.0M695.4 488.6L700.2 483.8M698.6 488.6L700.2 487.0" stroke="#1a1a1a" stroke-width="1.3" fill="none"/>
<path d="M595.5 490.2L598.1 494.2L600.7 490.2M595.5 494.2L598.1 498.2L600.7 494.2M598.1 490.2V498M600.7 490.2L603.3 494.2L605.9 490.2M600.7 494.2L603.3 498.2L605.9 494.2M603.3 490.2V498M605.9 490.2L608.5 494.2L611.1 490.2M605.9 494.2L608.5 498.2L611.1 494.2M608.5 490.2V498M611.1 490.2L613.7 494.2L616.3 490.2M611.1 494.2L613.7 498.2L616.3 494.2M613.7 490.2V498M616.3 490.2L618.9 494.2L621.5 490.2M616.3 494.2L618.9 498.2L621.5 494.2M618.9 490.2V498M621.5 490.2L624.1 494.2L626.7 490.2M621.5 494.2L624.1 498.2L626.7 494.2M624.1 490.2V498M626.7 490.2L629.3 494.2L631.9 490.2M626.7 494.2L629.3 498.2L631.9 494.2M629.3 490.2V498M631.9 490.2L634.5 494.2L637.1 490.2M631.9 494.2L634.5 498.2L637.1 494.2M634.5 490.2V498M637.1 490.2L639.7 494.2L642.3 490.2M637.1 494.2L639.7 498.2L642.3 494.2M639.7 490.2V498M642.3 490.2L644.9 494.2L647.5 490.2M642.3 494.2L644.9 498.2L647.5 494.2M644.9 490.2V498M647.5 490.2L650.1 494.2L652.7 490.2M647.5 494.2L650.1 498.2L652.7 494.2M650.1 490.2V498M652.7 490.2L655.3 494.2L657.9 490.2M652.7 494.2L655.3 498.2L657.9 494.2M655.3 490.2V498M657.9 490.2L660.5 494.2L663.1 490.2M657.9 494.2L660.5 498.2L663.1 494.2M660.5 490.2V498M663.1 490.2L665.7 494.2L668.3 490.2M663.1 494.2L665.7 498.2L668.3 494.2M665.7 490.2V498M668.3 490.2L670.9 494.2L673.5 490.2M668.3 494.2L670.9 498.2L673.5 494.2M670.9 490.2V498M673.5 490.2L676.1 494.2L678.7 490.2M673.5 494.2L676.1 498.2L678.7 494.2M676.1 490.2V498M678.7 490.2L681.3 494.2L683.9 490.2M678.7 494.2L681.3 498.2L683.9 494.2M681.3 490.2V498M683.9 490.2L686.5 494.2L689.1 490.2M683.9 494.2L686.5 498.2L689.1 494.2M686.5 490.2V498M689.1 490.2L691.7 494.2L694.3 490.2M689.1 494.2L691.7 498.2L694.3 494.2M691.7 490.2V498M694.3 490.2L696.9 494.2L699.5 490.2M694.3 494.2L696.9 498.2L699.5 494.2M696.9 490.2V498" stroke="#1a1a1a" stroke-width="1.1" fill="none"/>
<path d="M595 482.400H700.200" stroke="#1a1a1a" stroke-width="2"/><path d="M595 489.600H700.200" stroke="#1a1a1a" stroke-width="1"/>
<path d="M611.1 534.4L618.3 542.6M611.1 542.6L618.3 534.4M618.3 534.4L625.5 542.6M618.3 542.6L625.5 534.4M625.5 534.4L632.7 542.6M625.5 542.6L632.7 534.4M632.7 534.4L639.9 542.6M632.7 542.6L639.9 534.4M639.9 534.4L647.1 542.6M639.9 542.6L647.1 534.4M647.1 534.4L654.3 542.6M647.1 542.6L654.3 534.4M654.3 534.4L661.5 542.6M654.3 542.6L661.5 534.4M661.5 534.4L668.7 542.6M661.5 542.6L668.7 534.4M668.7 534.4L675.9 542.6M668.7 542.6L675.9 534.4M675.9 534.4L683.1 542.6M675.9 542.6L683.1 534.4M683.1 534.4L690.3 542.6M683.1 542.6L690.3 534.4M690.3 534.4L697.5 542.6M690.3 542.6L697.5 534.4M697.5 534.4L700.2 537.5M697.5 542.6L700.2 539.5" stroke="#1a1a1a" stroke-width="1.3" fill="none"/><path d="M610.300 542.600H700.200" stroke="#1a1a1a" stroke-width="1.600"/><path d="M610.300 534.400H700.200" stroke="#1a1a1a" stroke-width="1.8"/>
<path d="M539.8 542.4L546.8 535.4M539.8 572.4L576.8 535.4M539.8 602.4L606.8 535.4M554.7 617.5L609.3 562.9M584.7 617.5L609.3 592.9" stroke="#1a1a1a" stroke-width="1.15" fill="none"/>
<g stroke="#1a1a1a" stroke-width="1.15" stroke-dasharray="7.4 2.9" fill="none"><path d="M539.8 552.4L556.8 535.4" stroke-dashoffset="1.4"/><path d="M539.8 562.4L566.8 535.4" stroke-dashoffset="4.6"/><path d="M539.8 582.4L586.8 535.4" stroke-dashoffset="0.8"/><path d="M539.8 592.4L596.8 535.4" stroke-dashoffset="4.0"/><path d="M539.8 612.4L609.3 542.9" stroke-dashoffset="0.2"/><path d="M544.7 617.5L609.3 552.9" stroke-dashoffset="0.0"/><path d="M564.7 617.5L609.3 572.9" stroke-dashoffset="3.9"/><path d="M574.7 617.5L609.3 582.9" stroke-dashoffset="0.6"/><path d="M594.7 617.5L609.3 602.9" stroke-dashoffset="4.5"/><path d="M604.7 617.5L609.3 612.9" stroke-dashoffset="1.2"/></g>
<rect x="538.800" y="534.400" width="71.500" height="84.100" fill="none" stroke="#1a1a1a" stroke-width="2.2"/>
<path d="M557.700 534.400H610.300" stroke="#1a1a1a" stroke-width="2"/>
<path d="M457.700 438H557.200M457.700 498.300H557.200" stroke="#1a1a1a" stroke-width="1"/><path d="M492.500 438.400H557.200" stroke="#1a1a1a" stroke-width="1.800"/>
<path d="M467.700 438V498.300" stroke="#1a1a1a" stroke-width="1"/><path d="M467.700 438l-2.700 12h5.400zM467.700 498.300l-2.700-12h5.400z" fill="#1a1a1a"/>
<path d="M531.700 392.400H670.600" stroke="#1a1a1a" stroke-width="1"/><path d="M557.200 392.400l-13-2.800v5.600zM591 392.400l13-2.800v5.600z" fill="#1a1a1a"/>
<circle cx="579.400" cy="454.500" r="1.900" fill="#1a1a1a"/><path d="M579.400 454.500L621 436.900" stroke="#1a1a1a" stroke-width="1"/>
<path d="M700.200 489.700H735.400M700.200 498.300H735.400" stroke="#1a1a1a" stroke-width="1"/><path d="M725.300 421.600V489.700M725.300 498.300V524.800" stroke="#1a1a1a" stroke-width="1"/><path d="M725.300 489.700l-2.700-12h5.400zM725.300 498.300l-2.700 12h5.400z" fill="#1a1a1a"/>
<path d="M700.200 534.400H760.500M700.200 542.600H760.500" stroke="#1a1a1a" stroke-width="1"/><path d="M750.800 508.400V534.400M750.800 542.600V611.700" stroke="#1a1a1a" stroke-width="1"/><path d="M750.800 534.400l-2.700-12h5.400zM750.800 542.600l-2.700 12h5.400z" fill="#1a1a1a"/>
<text transform="translate(625.8 382.8) scale(0.76 1)" font-size="17" letter-spacing="2.70" font-family="Liberation Sans,sans-serif" fill="#1a1a1a" stroke="#1a1a1a" stroke-width="0.550">≥240</text>
<text transform="translate(625 440.7) scale(0.76 1)" font-size="16.5" letter-spacing="1.09" font-family="Liberation Sans,sans-serif" fill="#1a1a1a" stroke="#1a1a1a" stroke-width="0.550">4</text>
<text transform="translate(454.8 533.2) rotate(-90) scale(0.76 1)" font-size="17" letter-spacing="2.30" font-family="Liberation Sans,sans-serif" fill="#1a1a1a" stroke="#1a1a1a" stroke-width="0.550">Erdreich &gt;1 000</text>
<text transform="translate(715.7 455.4) rotate(-90) scale(0.76 1)" font-size="17" letter-spacing="2.13" font-family="Liberation Sans,sans-serif" fill="#1a1a1a" stroke="#1a1a1a" stroke-width="0.550">≥60</text>
<text transform="translate(741.7 603) rotate(-90) scale(0.76 1)" font-size="17" letter-spacing="2.99" font-family="Liberation Sans,sans-serif" fill="#1a1a1a" stroke="#1a1a1a" stroke-width="0.550">≥40</text>
</svg>
</body></html>
